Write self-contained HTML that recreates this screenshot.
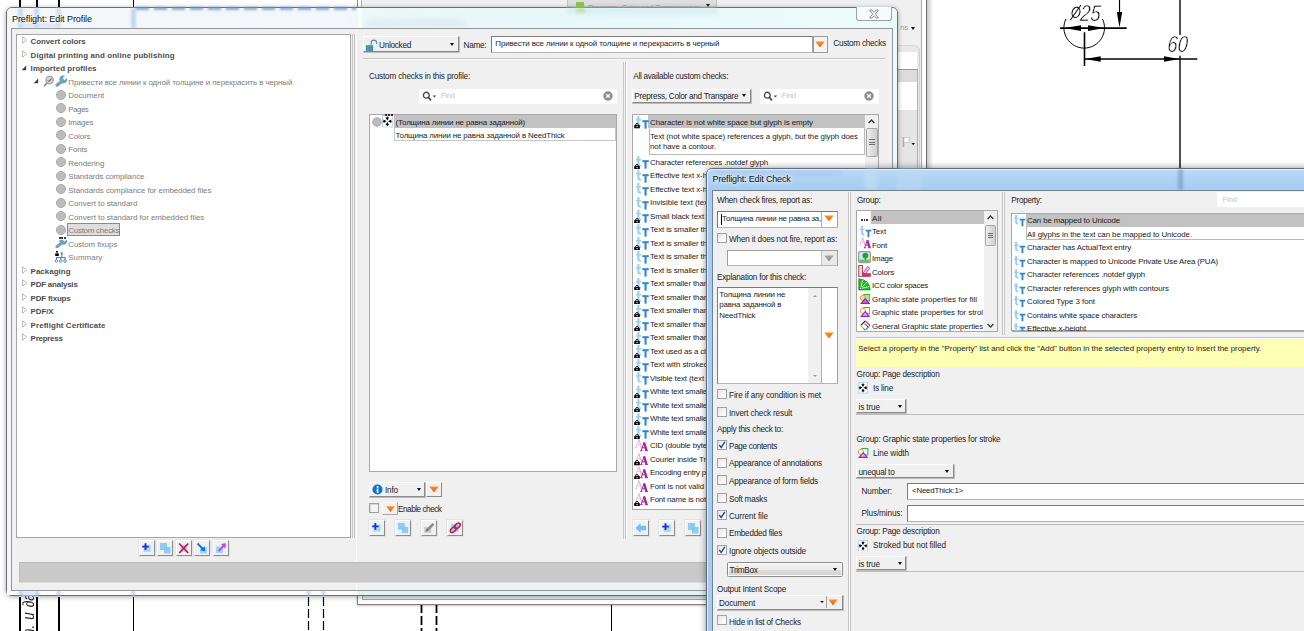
<!DOCTYPE html>
<html><head><meta charset="utf-8"><title>Preflight</title><style>
html,body{margin:0;padding:0;}
body{width:1304px;height:631px;overflow:hidden;position:relative;background:#fff;font-family:"Liberation Sans",sans-serif;}
div,span,svg{position:absolute;box-sizing:border-box;}
.t{white-space:nowrap;}
</style></head><body>
<div style="left:19.4px;top:0px;width:2.1px;height:8px;background:#000;"></div>
<div style="left:35.5px;top:0px;width:2.1px;height:8px;background:#000;"></div>
<div style="left:58.2px;top:0px;width:1.5px;height:8px;background:#000;"></div>
<div style="left:132.6px;top:0px;width:1.5px;height:8px;background:#000;"></div>
<div style="left:19.4px;top:597px;width:2.1px;height:40px;background:#000;"></div>
<div style="left:35.5px;top:597px;width:2.1px;height:40px;background:#000;"></div>
<div style="left:58.2px;top:597px;width:1.5px;height:40px;background:#000;"></div>
<div style="left:132.5px;top:597px;width:1.2px;height:40px;background:#000;"></div>
<svg style="left:18px;top:596px;opacity:.98;" width="22" height="36" viewBox="0 0 22 36"><text transform="translate(16.3,40) rotate(-90) scale(.84,1)" font-family="Liberation Sans" font-style="italic" font-size="16" fill="#1a1a1a" word-spacing="1.5">n. u &#8706;a</text></svg>
<svg style="left:307px;top:597px;" width="3" height="40" viewBox="0 0 3 40"><line x1="1.5" y1="0" x2="1.5" y2="40" stroke="#000" stroke-width="1.2" stroke-dasharray="9 3"/></svg>
<svg style="left:322px;top:597px;" width="3" height="40" viewBox="0 0 3 40"><line x1="1.5" y1="0" x2="1.5" y2="40" stroke="#000" stroke-width="1.2" stroke-dasharray="9 3"/></svg>
<svg style="left:420px;top:604px;" width="3" height="30" viewBox="0 0 3 30"><line x1="1.5" y1="0" x2="1.5" y2="30" stroke="#000" stroke-width="1.8" stroke-dasharray="9 3"/></svg>
<svg style="left:435px;top:604px;" width="3" height="30" viewBox="0 0 3 30"><line x1="1.5" y1="0" x2="1.5" y2="30" stroke="#000" stroke-width="1.8" stroke-dasharray="9 3"/></svg>
<div style="left:610.5px;top:604px;width:1.2px;height:30px;background:#000;"></div>
<svg style="left:1040px;top:0px;opacity:.99;" width="264" height="631" viewBox="0 0 264 631">
<g stroke="#000" fill="none">
<line x1="140" y1="0" x2="140" y2="35" stroke-width="1.4"/>
<line x1="140" y1="55.8" x2="140" y2="631" stroke-width="1.4"/>
<line x1="20" y1="28.1" x2="86.7" y2="28.1" stroke-width="1.6"/>
<path d="M25.9 19 A20.3 20.3 0 1 0 62.5 19" stroke-width="1"/>
<line x1="79.5" y1="0" x2="79.5" y2="14" stroke-width="1.2"/>
<line x1="44.5" y1="32.3" x2="44.5" y2="66" stroke-width="1.6"/>
<line x1="45" y1="59" x2="157.3" y2="59" stroke-width="1.3"/>
</g>
<g fill="#000">
<path d="M79.5 27.4 L76.8 12 L82.2 12Z"/>
<path d="M24.2 28.1 L41 25.3 L41 30.9Z"/>
<path d="M64.5 28.1 L48 25.3 L48 30.9Z"/>
<path d="M45 59 L60.7 56.3 L60.7 61.7Z"/>
<path d="M139.3 59 L124 56.3 L124 61.7Z"/>
</g>
<g stroke="#111" fill="none" stroke-width="1.1">
<ellipse cx="36" cy="12.3" rx="3.8" ry="5.2" transform="rotate(18 36 12.3)"/>
<line x1="30.3" y1="20" x2="41" y2="5"/>
</g>
<g font-family="Liberation Sans" font-style="italic" font-size="23" fill="#111" stroke="#fff" stroke-width=".5">
<text transform="translate(39.8,20.9) scale(.8,1) skewX(-5)">25</text>
<text transform="translate(127.1,52) scale(.8,1) skewX(-5)">60</text>
</g>
</svg>
<div style="left:357px;top:0px;width:570px;height:604px;background:#f0f0f0;"></div>
<div style="left:357px;top:0px;width:1px;height:604px;background:#8a8a8a;"></div>
<div style="left:358px;top:0px;width:3px;height:604px;background:#fff;"></div>
<div style="left:361px;top:0px;width:1px;height:604px;background:#b4b4b4;"></div>
<div style="left:921px;top:0px;width:1px;height:590px;background:#a8a8a8;"></div>
<div style="left:922px;top:0px;width:4px;height:590px;background:#fff;"></div>
<div style="left:926px;top:0px;width:1px;height:590px;background:#6e6e6e;"></div>
<div style="left:927px;top:0px;width:6px;height:590px;background:linear-gradient(90deg,rgba(0,0,0,.22),rgba(0,0,0,0));"></div>
<div style="left:567px;top:0px;width:150px;height:7px;background:#dedede;border:1px solid #c4c4c4;border-top:none;"></div>
<div style="left:576px;top:2px;width:8px;height:5px;background:#8cc63f;"></div>
<span id="t1" class="t" style="left:588px;top:1.50px;font-size:7.6px;line-height:12px;color:#9a9a9a;letter-spacing:-0.114px;">Prepress, Color and Transparency</span>
<div style="left:706px;top:4px;width:0;height:0;border-left:2.5px solid transparent;border-right:2.5px solid transparent;border-top:3px solid #111;"></div>
<span id="t2" class="t" style="left:900px;top:21.50px;font-size:7.8px;line-height:12px;color:#999;">ns</span>
<div style="left:910.5px;top:27px;width:0;height:0;border-left:2.6px solid transparent;border-right:2.6px solid transparent;border-top:3px solid #111;"></div>
<div style="left:897px;top:45px;width:23px;height:545px;background:#e9e9e9;border-top:1px solid #d8d8d8;border-right:1px solid #d0d0d0;border-top-right-radius:6px;"></div>
<div style="left:897px;top:52px;width:20px;height:538px;background:#fff;"></div>
<div style="left:897px;top:69px;width:21px;height:13px;background:#dcdcdc;border-top:1px solid #9a9a9a;"></div>
<div style="left:897px;top:110px;width:21px;height:60px;background:#e5e5e5;"></div>
<div style="left:917px;top:69px;width:1px;height:521px;background:#b0b0b0;"></div>
<svg style="left:902px;top:136px;" width="14" height="12" viewBox="0 0 14 12"><path d="M1.5 1 L1.5 11" stroke="#aaa" stroke-width="1.6"/><path d="M2 1.5 L8 1.5 L6.5 4 L8.5 6.5 L2 6.5Z" fill="#fff" stroke="#c0c0c0" stroke-width=".7"/><path d="M9.5 7 L13 7 L11.2 9.3Z" fill="#111"/></svg>
<div style="left:357px;top:594px;width:349px;height:10.5px;background:#fff;border:1px solid #7f7f7f;border-top:none;border-right:none;box-shadow:0 1px 2px rgba(0,0,0,.25);"></div>
<div style="left:361.5px;top:594px;width:345px;height:6.3px;background:#ececec;border-left:1px solid #a8a8a8;border-bottom:1px solid #a8a8a8;"></div>
<div style="left:6px;top:7px;width:892px;height:588.7px;background:#f3f6fa;border:1px solid #6c6c6c;border-radius:6px;box-shadow:0 1px 5px rgba(0,0,0,.35);"></div>
<div style="left:7px;top:8px;width:890px;height:21px;border-radius:5px 5px 0 0;background:linear-gradient(90deg,#f4f6f9 0%,#f3f6fa 38%,#eef7f9 40%,#e8f8f8 60%,#ecfafa 100%);"></div>
<div style="left:358px;top:589.7px;width:535px;height:5px;background:#dcf3f7;"></div>
<div style="left:7px;top:589.7px;width:351px;height:5px;background:#fbfcfe;"></div>
<div style="left:7px;top:28px;width:4px;height:565.7px;background:#f4f6f9;"></div>
<div style="left:892px;top:28px;width:5px;height:565.7px;background:#eef9fa;"></div>
<div style="left:18px;top:8px;width:5px;height:20px;background:#b9d3ea;filter:blur(1.2px);opacity:.75;"></div>
<div style="left:34px;top:8px;width:5px;height:20px;background:#b9d3ea;filter:blur(1.2px);opacity:.75;"></div>
<div style="left:56px;top:8px;width:5px;height:20px;background:#c6dbee;filter:blur(1.2px);opacity:.75;"></div>
<div style="left:131px;top:8px;width:5px;height:20px;background:#b4cfe8;filter:blur(1.2px);opacity:.75;"></div>
<div style="left:21px;top:24px;width:36px;height:3px;background:#c4d9ed;filter:blur(1.5px);opacity:.7;"></div>
<div style="left:136px;top:7.3px;width:220px;height:2.6px;background:repeating-linear-gradient(90deg,#6b98c8 0 13px,transparent 13px 18px);filter:blur(.9px);opacity:.8;"></div>
<div style="left:357.5px;top:8px;width:4px;height:20px;background:#fbfefe;filter:blur(.6px);opacity:.9;"></div>
<div style="left:366px;top:19px;width:100px;height:9px;background:#d3e6f3;filter:blur(2.5px);opacity:.55;border-radius:3px;"></div>
<div style="left:567px;top:8px;width:150px;height:6px;background:#cfe9ee;filter:blur(2px);opacity:.7;"></div>
<div style="left:576px;top:8px;width:9px;height:5px;background:#b8dc8a;filter:blur(1.5px);opacity:.7;"></div>
<span id="t3" class="t" style="left:12px;top:13.00px;font-size:9px;line-height:12px;color:#111;text-shadow:0 0 4px #fff,0 0 6px #fff;letter-spacing:-0.067px;">Preflight: Edit Profile</span>
<div style="left:19px;top:591px;width:3.5px;height:4.5px;background:#9fc4e6;filter:blur(.8px);opacity:.8;"></div>
<div style="left:35px;top:591px;width:3.5px;height:4.5px;background:#9fc4e6;filter:blur(.8px);opacity:.8;"></div>
<div style="left:57.3px;top:591px;width:3px;height:4.5px;background:#9fc4e6;filter:blur(.8px);opacity:.8;"></div>
<div style="left:132px;top:591px;width:3px;height:4.5px;background:#9fc4e6;filter:blur(.8px);opacity:.8;"></div>
<div style="left:307px;top:591px;width:3px;height:4.5px;background:#9fc4e6;filter:blur(.8px);opacity:.8;"></div>
<div style="left:322px;top:591px;width:3px;height:4.5px;background:#9fc4e6;filter:blur(.8px);opacity:.8;"></div>
<div style="left:22px;top:591px;width:13px;height:4.5px;background:#cfe3f5;filter:blur(.8px);opacity:.8;"></div>
<div style="left:856px;top:7px;width:36px;height:14px;background:#f7fbfd;border:1px solid #9aa4ac;border-top:none;border-radius:0 0 3px 3px;"></div>
<svg style="left:868px;top:9px;" width="12" height="10" viewBox="0 0 12 10"><path d="M1.5 1 L4 1 L6 3.4 L8 1 L10.5 1 L7.3 5 L10.5 9 L8 9 L6 6.6 L4 9 L1.5 9 L4.7 5Z" fill="#fdfdfd" stroke="#7d848a" stroke-width=".9"/></svg>
<div style="left:11px;top:28px;width:882px;height:563px;background:#f0f0f0;border:1px solid #8f969c;"></div>
<div style="left:16px;top:34px;width:335px;height:504px;background:#fff;border:1px solid #a5a5a5;"></div>
<div style="left:352px;top:34px;width:1px;height:504px;background:#c8c8c8;"></div>
<div style="left:354px;top:34px;width:1px;height:504px;background:#c8c8c8;"></div>
<div style="left:356px;top:29px;width:1px;height:560.5px;background:#fbfbfb;"></div>
<svg style="left:22.3px;top:36.400000000000006px;" width="6" height="8" viewBox="0 0 6 8"><path d="M.6 .8 L4.6 4 L.6 7.2Z" fill="#fff" stroke="#a6a6a6" stroke-width=".8"/></svg>
<span id="t4" class="t" style="left:30.6px;top:35.50px;font-size:7.9px;line-height:12px;color:#4d4d4d;font-weight:700;letter-spacing:-0.049px;">Convert colors</span>
<svg style="left:22.3px;top:49.900000000000006px;" width="6" height="8" viewBox="0 0 6 8"><path d="M.6 .8 L4.6 4 L.6 7.2Z" fill="#fff" stroke="#a6a6a6" stroke-width=".8"/></svg>
<span id="t5" class="t" style="left:30.6px;top:49.50px;font-size:7.9px;line-height:12px;color:#4d4d4d;font-weight:700;letter-spacing:0.121px;">Digital printing and online publishing</span>
<svg style="left:21.4px;top:64.6px;" width="6" height="6" viewBox="0 0 6 6"><path d="M5.2 .6 L5.2 5.2 L.6 5.2Z" fill="#404040"/></svg>
<span id="t6" class="t" style="left:30.6px;top:62.50px;font-size:7.9px;line-height:12px;color:#4d4d4d;font-weight:700;letter-spacing:0.091px;">Imported profiles</span>
<svg style="left:33.3px;top:77.69999999999999px;" width="6" height="6" viewBox="0 0 6 6"><path d="M5.2 .6 L5.2 5.2 L.6 5.2Z" fill="#404040"/></svg>
<svg style="left:42.8px;top:74.89999999999999px;" width="12" height="12" viewBox="0 0 12 12"><circle cx="6.6" cy="5" r="3.7" fill="#d2d2d2" stroke="#9a9a9a" stroke-width="1.1"/><path d="M4 8 L1 11.2" stroke="#8a8a8a" stroke-width="1.7"/><path d="M4.8 5.2 L6.2 6.6 L8.6 3.4" stroke="#555" stroke-width="1" fill="none"/></svg>
<svg style="left:54.5px;top:74.69999999999999px;" width="12" height="12" viewBox="0 0 12 12"><path d="M7 6.2 L2 10.3" stroke="#6fa3bb" stroke-width="3.1" stroke-linecap="round"/><circle cx="8.3" cy="4.5" r="3.9" fill="#6fa3bb"/><path d="M8.6 4.2 L12.6 .2" stroke="#fff" stroke-width="2.7"/></svg>
<span id="t7" class="t" style="left:68.3px;top:76.50px;font-size:7.9px;line-height:12px;color:#7d7d7d;letter-spacing:-0.077px;">Привести все линии к одной толщине и перекрасить в черный</span>
<svg style="left:54.7px;top:88.69999999999999px;" width="12" height="12" viewBox="0 0 12 12"><circle cx="6" cy="6" r="4.6" fill="#bcbcbc" stroke="#a8a8a8" stroke-width=".9"/></svg>
<span id="t8" class="t" style="left:68.3px;top:89.50px;font-size:7.9px;line-height:12px;color:#7d7d7d;letter-spacing:0.004px;">Document</span>
<svg style="left:54.7px;top:102.19999999999999px;" width="12" height="12" viewBox="0 0 12 12"><circle cx="6" cy="6" r="4.6" fill="#bcbcbc" stroke="#a8a8a8" stroke-width=".9"/></svg>
<span id="t9" class="t" style="left:68.3px;top:103.50px;font-size:7.9px;line-height:12px;color:#7d7d7d;letter-spacing:-0.475px;">Pages</span>
<svg style="left:54.7px;top:115.69999999999999px;" width="12" height="12" viewBox="0 0 12 12"><circle cx="6" cy="6" r="4.6" fill="#bcbcbc" stroke="#a8a8a8" stroke-width=".9"/></svg>
<span id="t10" class="t" style="left:68.3px;top:116.50px;font-size:7.9px;line-height:12px;color:#7d7d7d;letter-spacing:-0.148px;">Images</span>
<svg style="left:54.7px;top:129.2px;" width="12" height="12" viewBox="0 0 12 12"><circle cx="6" cy="6" r="4.6" fill="#bcbcbc" stroke="#a8a8a8" stroke-width=".9"/></svg>
<span id="t11" class="t" style="left:68.3px;top:130.50px;font-size:7.9px;line-height:12px;color:#7d7d7d;letter-spacing:-0.135px;">Colors</span>
<svg style="left:54.7px;top:142.7px;" width="12" height="12" viewBox="0 0 12 12"><circle cx="6" cy="6" r="4.6" fill="#bcbcbc" stroke="#a8a8a8" stroke-width=".9"/></svg>
<span id="t12" class="t" style="left:68.3px;top:143.50px;font-size:7.9px;line-height:12px;color:#7d7d7d;letter-spacing:-0.147px;">Fonts</span>
<svg style="left:54.7px;top:156.2px;" width="12" height="12" viewBox="0 0 12 12"><circle cx="6" cy="6" r="4.6" fill="#bcbcbc" stroke="#a8a8a8" stroke-width=".9"/></svg>
<span id="t13" class="t" style="left:68.3px;top:157.50px;font-size:7.9px;line-height:12px;color:#7d7d7d;letter-spacing:-0.047px;">Rendering</span>
<svg style="left:54.7px;top:169.7px;" width="12" height="12" viewBox="0 0 12 12"><circle cx="6" cy="6" r="4.6" fill="#bcbcbc" stroke="#a8a8a8" stroke-width=".9"/></svg>
<span id="t14" class="t" style="left:68.3px;top:170.50px;font-size:7.9px;line-height:12px;color:#7d7d7d;letter-spacing:-0.104px;">Standards compliance</span>
<svg style="left:54.7px;top:183.2px;" width="12" height="12" viewBox="0 0 12 12"><circle cx="6" cy="6" r="4.6" fill="#bcbcbc" stroke="#a8a8a8" stroke-width=".9"/></svg>
<span id="t15" class="t" style="left:68.3px;top:184.50px;font-size:7.9px;line-height:12px;color:#7d7d7d;letter-spacing:-0.056px;">Standards compliance for embedded files</span>
<svg style="left:54.7px;top:196.7px;" width="12" height="12" viewBox="0 0 12 12"><circle cx="6" cy="6" r="4.6" fill="#bcbcbc" stroke="#a8a8a8" stroke-width=".9"/></svg>
<span id="t16" class="t" style="left:68.3px;top:197.50px;font-size:7.9px;line-height:12px;color:#7d7d7d;letter-spacing:-0.016px;">Convert to standard</span>
<svg style="left:54.7px;top:210.2px;" width="12" height="12" viewBox="0 0 12 12"><circle cx="6" cy="6" r="4.6" fill="#bcbcbc" stroke="#a8a8a8" stroke-width=".9"/></svg>
<span id="t17" class="t" style="left:68.3px;top:211.50px;font-size:7.9px;line-height:12px;color:#7d7d7d;letter-spacing:-0.011px;">Convert to standard for embedded files</span>
<svg style="left:54.7px;top:223.7px;" width="12" height="12" viewBox="0 0 12 12"><circle cx="6" cy="6" r="4.6" fill="#bcbcbc" stroke="#a8a8a8" stroke-width=".9"/></svg>
<div style="left:67px;top:222.89999999999998px;width:53px;height:13.5px;background:#dedede;border:1px solid #7090b8;"></div>
<span id="t18" class="t" style="left:68.3px;top:224.50px;font-size:7.9px;line-height:12px;color:#7d7d7d;letter-spacing:-0.226px;">Custom checks</span>
<svg style="left:54.5px;top:240.2px;" width="12" height="7.8" viewBox="0 3.6 12 7.8"><path d="M7 6.2 L2 10.3" stroke="#6fa3bb" stroke-width="3.1" stroke-linecap="round"/><circle cx="8.3" cy="4.5" r="3.9" fill="#6fa3bb"/><path d="M8.6 4.2 L12.6 .2" stroke="#fff" stroke-width="2.7"/></svg>
<div style="left:58.6px;top:237.29999999999998px;width:2.2px;height:2.2px;background:#000;border-radius:1px;"></div>
<div style="left:61.300000000000004px;top:237.29999999999998px;width:2.2px;height:2.2px;background:#000;border-radius:1px;"></div>
<div style="left:64.0px;top:237.29999999999998px;width:2.2px;height:2.2px;background:#000;border-radius:1px;"></div>
<span id="t19" class="t" style="left:68.3px;top:238.50px;font-size:7.9px;line-height:12px;color:#7d7d7d;letter-spacing:-0.077px;">Custom fixups</span>
<svg style="left:54px;top:249.70000000000005px;" width="13" height="13" viewBox="0 0 13 13"><rect x="1.2" y="3.4" width="3.6" height="2.6" fill="#000"/><circle cx="3" cy="1.8" r="1" fill="#000"/><path d="M6.5 3.8 L9 3.8 M7.8 2 L7.8 7.5 M2.5 10 L2.5 7.5 L11 7.5 L11 10 M6.8 7.5 L6.8 10" stroke="#4a86c5" stroke-width="1.1" fill="none"/><circle cx="2.5" cy="11" r="1.3" fill="#fff" stroke="#4a86c5" stroke-width=".9"/><circle cx="6.8" cy="11" r="1.3" fill="#fff" stroke="#4a86c5" stroke-width=".9"/><circle cx="11" cy="11" r="1.3" fill="#fff" stroke="#4a86c5" stroke-width=".9"/></svg>
<span id="t20" class="t" style="left:68.3px;top:251.50px;font-size:7.9px;line-height:12px;color:#7d7d7d;letter-spacing:0.033px;">Summary</span>
<svg style="left:22.3px;top:265.90000000000003px;" width="6" height="8" viewBox="0 0 6 8"><path d="M.6 .8 L4.6 4 L.6 7.2Z" fill="#fff" stroke="#a6a6a6" stroke-width=".8"/></svg>
<span id="t21" class="t" style="left:30.6px;top:265.50px;font-size:7.9px;line-height:12px;color:#4d4d4d;font-weight:700;letter-spacing:0.059px;">Packaging</span>
<svg style="left:22.3px;top:279.40000000000003px;" width="6" height="8" viewBox="0 0 6 8"><path d="M.6 .8 L4.6 4 L.6 7.2Z" fill="#fff" stroke="#a6a6a6" stroke-width=".8"/></svg>
<span id="t22" class="t" style="left:30.6px;top:278.50px;font-size:7.9px;line-height:12px;color:#4d4d4d;font-weight:700;letter-spacing:-0.177px;">PDF analysis</span>
<svg style="left:22.3px;top:292.90000000000003px;" width="6" height="8" viewBox="0 0 6 8"><path d="M.6 .8 L4.6 4 L.6 7.2Z" fill="#fff" stroke="#a6a6a6" stroke-width=".8"/></svg>
<span id="t23" class="t" style="left:30.6px;top:292.50px;font-size:7.9px;line-height:12px;color:#4d4d4d;font-weight:700;letter-spacing:-0.122px;">PDF fixups</span>
<svg style="left:22.3px;top:306.40000000000003px;" width="6" height="8" viewBox="0 0 6 8"><path d="M.6 .8 L4.6 4 L.6 7.2Z" fill="#fff" stroke="#a6a6a6" stroke-width=".8"/></svg>
<span id="t24" class="t" style="left:30.6px;top:305.50px;font-size:7.9px;line-height:12px;color:#4d4d4d;font-weight:700;letter-spacing:-0.050px;">PDF/X</span>
<svg style="left:22.3px;top:319.90000000000003px;" width="6" height="8" viewBox="0 0 6 8"><path d="M.6 .8 L4.6 4 L.6 7.2Z" fill="#fff" stroke="#a6a6a6" stroke-width=".8"/></svg>
<span id="t25" class="t" style="left:30.6px;top:319.50px;font-size:7.9px;line-height:12px;color:#4d4d4d;font-weight:700;letter-spacing:0.105px;">Preflight Certificate</span>
<svg style="left:22.3px;top:333.40000000000003px;" width="6" height="8" viewBox="0 0 6 8"><path d="M.6 .8 L4.6 4 L.6 7.2Z" fill="#fff" stroke="#a6a6a6" stroke-width=".8"/></svg>
<span id="t26" class="t" style="left:30.6px;top:332.50px;font-size:7.9px;line-height:12px;color:#4d4d4d;font-weight:700;letter-spacing:-0.223px;">Prepress</span>
<div style="left:138.5px;top:540px;width:16px;height:16px;background:#f0f0f0;border:1px solid;border-color:#fff #8c8c8c #8c8c8c #fff;box-shadow:0 0 0 .5px #d8d8d8;"></div>
<svg style="left:138.5px;top:540px;" width="16" height="16" viewBox="0 0 16 16"><rect x="4.6" y="4.7" width="7.2" height="7.2" fill="#a8d8f8"/><path d="M6.5 3.2 L6.5 10 M3.2 6.6 L9.8 6.6" stroke="#1838c8" stroke-width="1.9"/></svg>
<div style="left:157.0px;top:540px;width:16px;height:16px;background:#f0f0f0;border:1px solid;border-color:#fff #8c8c8c #8c8c8c #fff;box-shadow:0 0 0 .5px #d8d8d8;"></div>
<svg style="left:157.0px;top:540px;" width="16" height="16" viewBox="0 0 16 16"><rect x="3" y="3" width="7" height="7" fill="#8ccdf6"/><rect x="7" y="7" width="6.5" height="6.5" fill="#7ec4f4" opacity=".85"/></svg>
<div style="left:175.5px;top:540px;width:16px;height:16px;background:#f0f0f0;border:1px solid;border-color:#fff #8c8c8c #8c8c8c #fff;box-shadow:0 0 0 .5px #d8d8d8;"></div>
<svg style="left:175.5px;top:540px;" width="16" height="16" viewBox="0 0 16 16"><rect x="4.5" y="4.8" width="7" height="7" fill="#9ed6fa"/><path d="M3.2 3.5 L12.2 13 M12.2 3.5 L3.2 13" stroke="#c81848" stroke-width="1.7"/></svg>
<div style="left:194.0px;top:540px;width:16px;height:16px;background:#f0f0f0;border:1px solid;border-color:#fff #8c8c8c #8c8c8c #fff;box-shadow:0 0 0 .5px #d8d8d8;"></div>
<svg style="left:194.0px;top:540px;" width="16" height="16" viewBox="0 0 16 16"><rect x="6" y="7" width="7" height="6.5" fill="#9ed6fa"/><path d="M3.5 3.5 L10 10" stroke="#0878e8" stroke-width="1.8"/><path d="M11.3 11.3 L6.2 10.6 L10.6 6.2Z" fill="#0878e8"/></svg>
<div style="left:212.5px;top:540px;width:16px;height:16px;background:#f0f0f0;border:1px solid;border-color:#fff #8c8c8c #8c8c8c #fff;box-shadow:0 0 0 .5px #d8d8d8;"></div>
<svg style="left:212.5px;top:540px;" width="16" height="16" viewBox="0 0 16 16"><rect x="3" y="6.5" width="7" height="6.5" fill="#9ed6fa"/><path d="M5.5 11 L11.5 5" stroke="#c63cf2" stroke-width="1.8"/><path d="M13 3.3 L12.2 8.4 L7.9 4.1Z" fill="#c63cf2"/></svg>
<div style="left:19px;top:561.5px;width:690px;height:21px;background:#c9c9c9;border-top:1px solid #b9b9b9;border-left:1px solid #bdbdbd;border-bottom:1px solid #dcdcdc;"></div>
<div style="left:363px;top:36px;width:95.5px;height:16.3px;background:#f0f0f0;border:1px solid;border-color:#fdfdfd #8a8a8a #8a8a8a #fdfdfd;box-shadow:.5px .5px 0 .3px #b0b0b0;"></div>
<div style="left:450.0px;top:42.949999999999996px;width:0;height:0;border-left:2.6px solid transparent;border-right:2.6px solid transparent;border-top:3px solid #111;"></div>
<svg style="left:364.5px;top:38.5px;" width="14" height="13" viewBox="0 0 14 13"><path d="M6.2 6.5 L6.2 3.8 C6.2 .2 11.6 .2 11.6 3.8 L11.6 5" fill="none" stroke="#4e93ab" stroke-width="1.1"/><rect x=".8" y="6.2" width="7.4" height="5.8" fill="#4e93ab"/></svg>
<span id="t27" class="t" style="left:379px;top:39.50px;font-size:8.2px;line-height:12px;color:#1c1c1c;letter-spacing:-0.268px;">Unlocked</span>
<span id="t28" class="t" style="left:463.6px;top:39.50px;font-size:8.2px;line-height:12px;color:#1c1c1c;letter-spacing:-0.285px;">Name:</span>
<div style="left:491px;top:36px;width:322px;height:16.6px;background:#fff;border:1px solid #7a7a7a;border-bottom-color:#b5b5b5;border-right-color:#a0a0a0;"></div>
<span id="t29" class="t" style="left:495.3px;top:37.50px;font-size:7.9px;line-height:12px;color:#1c1c1c;letter-spacing:-0.077px;">Привести все линии к одной толщине и перекрасить в черный</span>
<div style="left:812.5px;top:36px;width:15.5px;height:16.6px;background:#f4f4f4;border:1px solid #9a9a9a;"></div>
<svg style="left:815.3px;top:41.1px;" width="10.0" height="7.0" viewBox="0 0 10 7"><defs><linearGradient id="og820_44" x1="0" y1="0" x2="0" y2="1"><stop offset="0" stop-color="#f7941d"/><stop offset="1" stop-color="#f15a22"/></linearGradient></defs><path d="M.3 .4 L9.7 .4 L5 6.6Z" fill="url(#og820_44)"/></svg>
<span id="t30" class="t" style="left:833.3px;top:37.50px;font-size:8.2px;line-height:12px;color:#1c1c1c;letter-spacing:-0.267px;">Custom checks</span>
<div style="left:363px;top:58px;width:522px;height:1px;background:#c6c6c6;"></div>
<div style="left:363px;top:59px;width:522px;height:1px;background:#fafafa;"></div>
<span id="t31" class="t" style="left:369px;top:70.50px;font-size:8.2px;line-height:12px;color:#1c1c1c;letter-spacing:-0.183px;">Custom checks in this profile:</span>
<div style="left:419px;top:88.5px;width:198px;height:15.3px;background:#fff;"></div>
<svg style="left:421.5px;top:91.0px;" width="18" height="11" viewBox="0 0 18 11"><circle cx="4.3" cy="4.2" r="2.9" fill="none" stroke="#4a4a4a" stroke-width="1.4"/><path d="M6.3 6.4 L9 9.4" stroke="#4a4a4a" stroke-width="1.7"/><path d="M10.6 4.4 L14.2 4.4 L12.4 6.6Z" fill="#4a4a4a"/></svg>
<span id="t32" class="t" style="left:440.7px;top:89.50px;font-size:7.9px;line-height:12px;color:#c6c6c6;letter-spacing:-0.265px;">Find</span>
<svg style="left:602.5px;top:91.2px;" width="10" height="10" viewBox="0 0 10 10"><circle cx="5" cy="5" r="4.7" fill="#8e8e8e"/><path d="M3.2 3.2 L6.8 6.8 M6.8 3.2 L3.2 6.8" stroke="#fff" stroke-width="1.3"/></svg>
<div style="left:369px;top:114px;width:248px;height:358px;background:#fff;border:1px solid #a8a8a8;"></div>
<div style="left:393.7px;top:115px;width:222.3px;height:13.3px;background:#c2c2c2;"></div>
<div style="left:393.7px;top:128.3px;width:222.3px;height:12.8px;background:#fff;border:1px solid #c6c6c6;border-top:none;"></div>
<svg style="left:371.3px;top:115.8px;" width="12" height="12" viewBox="0 0 12 12"><circle cx="6" cy="6" r="4.3" fill="#bcbcbc" stroke="#a8a8a8" stroke-width=".9"/></svg>
<svg style="left:382.2px;top:115.3px;" width="10.7" height="12.4" viewBox="0 0 10 11.5"><rect x=".4" y=".4" width="9.2" height="10.7" fill="#fff" stroke="#a9d0e8" stroke-width=".8"/><path d="M5 5.1 L3.3 2.3 L6.7 2.3Z M5 6.5 L3.3 9.3 L6.7 9.3Z M4.3 5.8 L1.5 4.1 L1.5 7.5Z M5.7 5.8 L8.5 4.1 L8.5 7.5Z" fill="#000"/><path d="M5 1.4 V3 M5 10.2 V8.6 M.9 5.8 H2.2 M9.1 5.8 H7.8" stroke="#000" stroke-width="1"/></svg>
<div style="left:385.0px;top:114.2px;width:2px;height:2px;background:#000;border-radius:1px;"></div>
<div style="left:387.8px;top:114.2px;width:2px;height:2px;background:#000;border-radius:1px;"></div>
<div style="left:390.6px;top:114.2px;width:2px;height:2px;background:#000;border-radius:1px;"></div>
<span id="t33" class="t" style="left:395.5px;top:116.50px;font-size:7.9px;line-height:12px;color:#1c1c1c;letter-spacing:-0.132px;">(Толщина линии не равна заданной)</span>
<span id="t34" class="t" style="left:395.5px;top:129.50px;font-size:7.9px;line-height:12px;color:#1c1c1c;letter-spacing:-0.137px;">Толщина линии не равна заданной в NeedThick</span>
<div style="left:369.3px;top:481.5px;width:56px;height:15.5px;background:#f0f0f0;border:1px solid;border-color:#fdfdfd #8a8a8a #8a8a8a #fdfdfd;box-shadow:.5px .5px 0 .3px #b0b0b0;"></div>
<div style="left:416.8px;top:488.05px;width:0;height:0;border-left:2.6px solid transparent;border-right:2.6px solid transparent;border-top:3px solid #111;"></div>
<svg style="left:371.8px;top:483.8px;" width="11" height="11" viewBox="0 0 11 11"><circle cx="5.5" cy="5.5" r="5" fill="#1274c4"/><rect x="4.7" y="4.6" width="1.7" height="4.2" fill="#fff"/><circle cx="5.55" cy="2.9" r="1" fill="#fff"/></svg>
<span id="t35" class="t" style="left:385px;top:484.50px;font-size:8.2px;line-height:12px;color:#1c1c1c;letter-spacing:-0.168px;">Info</span>
<div style="left:426px;top:481.5px;width:16px;height:15.5px;background:#f0f0f0;border:1px solid;border-color:#fff #8a8a8a #8a8a8a #fff;"></div>
<svg style="left:429.3px;top:486.3px;" width="10.0" height="7.0" viewBox="0 0 10 7"><defs><linearGradient id="og434_489" x1="0" y1="0" x2="0" y2="1"><stop offset="0" stop-color="#f7941d"/><stop offset="1" stop-color="#f15a22"/></linearGradient></defs><path d="M.3 .4 L9.7 .4 L5 6.6Z" fill="url(#og434_489)"/></svg>
<div style="left:369.3px;top:503.3px;width:9.8px;height:10px;background:#f4f4f4;border:1px solid #a0a0a0;box-shadow:inset 1px 1px 0 #d8d8d8;"></div>
<div style="left:382.4px;top:502px;width:15.4px;height:12.6px;background:#f0f0f0;border:1px solid;border-color:#fdfdfd #a8a8a8 #a8a8a8 #fdfdfd;"></div>
<svg style="left:386.1px;top:505.55px;" width="9.0" height="6.3" viewBox="0 0 10 7"><defs><linearGradient id="og390_508" x1="0" y1="0" x2="0" y2="1"><stop offset="0" stop-color="#f7941d"/><stop offset="1" stop-color="#f15a22"/></linearGradient></defs><path d="M.3 .4 L9.7 .4 L5 6.6Z" fill="url(#og390_508)"/></svg>
<span id="t36" class="t" style="left:398px;top:503.50px;font-size:8.2px;line-height:12px;color:#1c1c1c;letter-spacing:-0.473px;">Enable check</span>
<div style="left:369.3px;top:520px;width:15.6px;height:15.6px;background:#f0f0f0;border:1px solid;border-color:#fff #8c8c8c #8c8c8c #fff;box-shadow:0 0 0 .5px #d8d8d8;"></div>
<svg style="left:369.3px;top:520px;" width="15.6" height="15.6" viewBox="0 0 16 16"><rect x="4.6" y="4.7" width="7.2" height="7.2" fill="#a8d8f8"/><path d="M6.5 3.2 L6.5 10 M3.2 6.6 L9.8 6.6" stroke="#1838c8" stroke-width="1.9"/></svg>
<div style="left:395.3px;top:520px;width:15.6px;height:15.6px;background:#f0f0f0;border:1px solid;border-color:#fff #8c8c8c #8c8c8c #fff;box-shadow:0 0 0 .5px #d8d8d8;"></div>
<svg style="left:395.3px;top:520px;" width="15.6" height="15.6" viewBox="0 0 16 16"><rect x="3" y="3" width="7" height="7" fill="#8ccdf6"/><rect x="7" y="7" width="6.5" height="6.5" fill="#7ec4f4" opacity=".85"/></svg>
<div style="left:421.2px;top:520px;width:15.6px;height:15.6px;background:#f0f0f0;border:1px solid;border-color:#fff #8c8c8c #8c8c8c #fff;box-shadow:0 0 0 .5px #d8d8d8;"></div>
<svg style="left:421.2px;top:520px;" width="15.6" height="15.6" viewBox="0 0 16 16"><rect x="3.2" y="7" width="7.2" height="6.3" fill="#cdcdcd"/><path d="M5 11.6 L6.2 8.6 L11.8 3 L13.8 5 L8.2 10.6Z" fill="#8c8c8c"/><path d="M4.6 12 L6 8.8 L8 10.8Z" fill="#6a6a6a"/></svg>
<div style="left:447.1px;top:520px;width:15.6px;height:15.6px;background:#f0f0f0;border:1px solid;border-color:#fff #8c8c8c #8c8c8c #fff;box-shadow:0 0 0 .5px #d8d8d8;"></div>
<svg style="left:447.1px;top:520px;" width="15.6" height="15.6" viewBox="0 0 16 16"><rect x="4.4" y="4.2" width="7.4" height="7.6" fill="#8ccdf6"/><ellipse cx="6.4" cy="10" rx="3.4" ry="2.1" transform="rotate(-42 6.4 10)" fill="none" stroke="#c81848" stroke-width="1.6"/><ellipse cx="10.6" cy="6" rx="3.4" ry="2.1" transform="rotate(-42 10.6 6)" fill="none" stroke="#c81848" stroke-width="1.6"/></svg>
<div style="left:622.5px;top:62px;width:1px;height:476.7px;background:#c8c8c8;"></div>
<div style="left:624.7px;top:62px;width:1px;height:476.7px;background:#c8c8c8;"></div>
<div style="left:626px;top:62px;width:1px;height:476.7px;background:#fbfbfb;"></div>
<span id="t37" class="t" style="left:633.2px;top:70.50px;font-size:8.2px;line-height:12px;color:#1c1c1c;letter-spacing:-0.264px;">All available custom checks:</span>
<div style="left:632px;top:88.5px;width:118.5px;height:14.3px;background:#f0f0f0;border:1px solid;border-color:#fdfdfd #8a8a8a #8a8a8a #fdfdfd;box-shadow:.5px .5px 0 .3px #b0b0b0;"></div>
<div style="left:742.0px;top:94.45px;width:0;height:0;border-left:2.6px solid transparent;border-right:2.6px solid transparent;border-top:3px solid #111;"></div>
<span id="t38" class="t" style="left:634.3px;top:90.50px;font-size:8.2px;line-height:12px;color:#1c1c1c;letter-spacing:-0.274px;">Prepress, Color and Transpare</span>
<div style="left:760px;top:88.5px;width:118.5px;height:15.3px;background:#fff;"></div>
<svg style="left:762.5px;top:91.0px;" width="18" height="11" viewBox="0 0 18 11"><circle cx="4.3" cy="4.2" r="2.9" fill="none" stroke="#4a4a4a" stroke-width="1.4"/><path d="M6.3 6.4 L9 9.4" stroke="#4a4a4a" stroke-width="1.7"/><path d="M10.6 4.4 L14.2 4.4 L12.4 6.6Z" fill="#4a4a4a"/></svg>
<span id="t39" class="t" style="left:781.7px;top:89.50px;font-size:7.9px;line-height:12px;color:#c6c6c6;letter-spacing:-0.265px;">Find</span>
<svg style="left:864.0px;top:91.2px;" width="10" height="10" viewBox="0 0 10 10"><circle cx="5" cy="5" r="4.7" fill="#8e8e8e"/><path d="M3.2 3.2 L6.8 6.8 M6.8 3.2 L3.2 6.8" stroke="#fff" stroke-width="1.3"/></svg>
<div style="left:631.5px;top:114px;width:247px;height:396px;background:#fff;border:1px solid #a8a8a8;"></div>
<div style="left:648px;top:115px;width:216.5px;height:13.3px;background:#c2c2c2;"></div>
<div style="left:648.5px;top:128.3px;width:216px;height:27px;background:#fff;border:1px solid #b9b9b9;border-top:none;"></div>
<div style="left:864.5px;top:115px;width:13.5px;height:394px;background:#f0f0f0;"></div>
<svg style="left:868px;top:118.5px;" width="7" height="5" viewBox="0 0 7 5"><path d="M.6 4 L3.5 1 L6.4 4" fill="none" stroke="#3c3c3c" stroke-width="1.4"/></svg>
<div style="left:866.3px;top:128.3px;width:11.6px;height:28.6px;border:1px solid #a6a6a6;border-radius:1.5px;background:linear-gradient(90deg,#ededed,#cfcfcf);"></div>
<div style="left:869.3px;top:139.3px;width:5.5px;height:1.1px;background:#6e6e6e;"></div>
<div style="left:869.3px;top:141.5px;width:5.5px;height:1.1px;background:#6e6e6e;"></div>
<div style="left:869.3px;top:143.70000000000002px;width:5.5px;height:1.1px;background:#6e6e6e;"></div>
<span id="t40" class="t" style="left:650px;top:116.50px;font-size:7.9px;line-height:12px;color:#1c1c1c;letter-spacing:-0.050px;">Character is not white space but glyph is empty</span>
<span id="t41" class="t" style="left:650px;top:130.50px;font-size:7.9px;line-height:12px;color:#1c1c1c;letter-spacing:-0.078px;">Text (not white space) references a glyph, but the glyph does</span>
<span id="t42" class="t" style="left:650px;top:140.50px;font-size:7.9px;line-height:12px;color:#1c1c1c;letter-spacing:-0.059px;">not have a contour.</span>
<svg style="left:636px;top:116.0px;" width="13.559999999999999" height="13.559999999999999" viewBox="0 0 12 12"><path d="M2.1 0 V7.2 Q2.1 8.7 4.3 8.5" fill="none" stroke="#98d0f6" stroke-width="1.9"/><path d="M0 3.3 H4.5" stroke="#98d0f6" stroke-width="1.4"/><path d="M5.6 4.6 H11.3" stroke="#3388cc" stroke-width="1.8"/><path d="M8.45 4.6 V11.2" stroke="#3388cc" stroke-width="1.9"/></svg>
<svg style="left:634.3px;top:123.19999999999999px;" width="6" height="5.4" viewBox="0 0 6 5.4"><path d="M1.6 2.4 V1.7 C1.6 .2 4.4 .2 4.4 1.7 V2.4" fill="none" stroke="#000" stroke-width="1"/><rect x=".2" y="2.1" width="5.6" height="3.2" fill="#000"/><rect x="2.5" y="3" width="1.1" height="1.3" fill="#fff"/></svg>
<svg style="left:636px;top:156.3px;" width="13.559999999999999" height="13.559999999999999" viewBox="0 0 12 12"><path d="M2.1 0 V7.2 Q2.1 8.7 4.3 8.5" fill="none" stroke="#98d0f6" stroke-width="1.9"/><path d="M0 3.3 H4.5" stroke="#98d0f6" stroke-width="1.4"/><path d="M5.6 4.6 H11.3" stroke="#3388cc" stroke-width="1.8"/><path d="M8.45 4.6 V11.2" stroke="#3388cc" stroke-width="1.9"/></svg>
<svg style="left:634.3px;top:163.5px;" width="6" height="5.4" viewBox="0 0 6 5.4"><path d="M1.6 2.4 V1.7 C1.6 .2 4.4 .2 4.4 1.7 V2.4" fill="none" stroke="#000" stroke-width="1"/><rect x=".2" y="2.1" width="5.6" height="3.2" fill="#000"/><rect x="2.5" y="3" width="1.1" height="1.3" fill="#fff"/></svg>
<span id="t43" class="t" style="left:650px;top:156.50px;font-size:7.9px;line-height:12px;color:#1c1c1c;letter-spacing:-0.103px;">Character references .notdef glyph</span>
<svg style="left:636px;top:169.8px;" width="13.559999999999999" height="13.559999999999999" viewBox="0 0 12 12"><path d="M2.1 0 V7.2 Q2.1 8.7 4.3 8.5" fill="none" stroke="#98d0f6" stroke-width="1.9"/><path d="M0 3.3 H4.5" stroke="#98d0f6" stroke-width="1.4"/><path d="M5.6 4.6 H11.3" stroke="#3388cc" stroke-width="1.8"/><path d="M8.45 4.6 V11.2" stroke="#3388cc" stroke-width="1.9"/></svg>
<span id="t44" class="t" style="left:650px;top:169.50px;font-size:7.9px;line-height:12px;color:#1c1c1c;letter-spacing:-0.066px;">Effective text x-h</span>
<svg style="left:636px;top:183.3px;" width="13.559999999999999" height="13.559999999999999" viewBox="0 0 12 12"><path d="M2.1 0 V7.2 Q2.1 8.7 4.3 8.5" fill="none" stroke="#98d0f6" stroke-width="1.9"/><path d="M0 3.3 H4.5" stroke="#98d0f6" stroke-width="1.4"/><path d="M5.6 4.6 H11.3" stroke="#3388cc" stroke-width="1.8"/><path d="M8.45 4.6 V11.2" stroke="#3388cc" stroke-width="1.9"/></svg>
<span id="t45" class="t" style="left:650px;top:183.50px;font-size:7.9px;line-height:12px;color:#1c1c1c;letter-spacing:-0.066px;">Effective text x-h</span>
<svg style="left:636px;top:196.8px;" width="13.559999999999999" height="13.559999999999999" viewBox="0 0 12 12"><path d="M2.1 0 V7.2 Q2.1 8.7 4.3 8.5" fill="none" stroke="#98d0f6" stroke-width="1.9"/><path d="M0 3.3 H4.5" stroke="#98d0f6" stroke-width="1.4"/><path d="M5.6 4.6 H11.3" stroke="#3388cc" stroke-width="1.8"/><path d="M8.45 4.6 V11.2" stroke="#3388cc" stroke-width="1.9"/></svg>
<span id="t46" class="t" style="left:650px;top:196.50px;font-size:7.9px;line-height:12px;color:#1c1c1c;letter-spacing:-0.040px;">Invisible text (tex</span>
<svg style="left:636px;top:210.3px;" width="13.559999999999999" height="13.559999999999999" viewBox="0 0 12 12"><path d="M2.1 0 V7.2 Q2.1 8.7 4.3 8.5" fill="none" stroke="#98d0f6" stroke-width="1.9"/><path d="M0 3.3 H4.5" stroke="#98d0f6" stroke-width="1.4"/><path d="M5.6 4.6 H11.3" stroke="#3388cc" stroke-width="1.8"/><path d="M8.45 4.6 V11.2" stroke="#3388cc" stroke-width="1.9"/></svg>
<svg style="left:634.3px;top:217.5px;" width="6" height="5.4" viewBox="0 0 6 5.4"><path d="M1.6 2.4 V1.7 C1.6 .2 4.4 .2 4.4 1.7 V2.4" fill="none" stroke="#000" stroke-width="1"/><rect x=".2" y="2.1" width="5.6" height="3.2" fill="#000"/><rect x="2.5" y="3" width="1.1" height="1.3" fill="#fff"/></svg>
<span id="t47" class="t" style="left:650px;top:210.50px;font-size:7.9px;line-height:12px;color:#1c1c1c;letter-spacing:-0.079px;">Small black text</span>
<svg style="left:636px;top:223.8px;" width="13.559999999999999" height="13.559999999999999" viewBox="0 0 12 12"><path d="M2.1 0 V7.2 Q2.1 8.7 4.3 8.5" fill="none" stroke="#98d0f6" stroke-width="1.9"/><path d="M0 3.3 H4.5" stroke="#98d0f6" stroke-width="1.4"/><path d="M5.6 4.6 H11.3" stroke="#3388cc" stroke-width="1.8"/><path d="M8.45 4.6 V11.2" stroke="#3388cc" stroke-width="1.9"/></svg>
<span id="t48" class="t" style="left:650px;top:223.50px;font-size:7.9px;line-height:12px;color:#1c1c1c;letter-spacing:-0.098px;">Text is smaller th</span>
<svg style="left:636px;top:237.3px;" width="13.559999999999999" height="13.559999999999999" viewBox="0 0 12 12"><path d="M2.1 0 V7.2 Q2.1 8.7 4.3 8.5" fill="none" stroke="#98d0f6" stroke-width="1.9"/><path d="M0 3.3 H4.5" stroke="#98d0f6" stroke-width="1.4"/><path d="M5.6 4.6 H11.3" stroke="#3388cc" stroke-width="1.8"/><path d="M8.45 4.6 V11.2" stroke="#3388cc" stroke-width="1.9"/></svg>
<svg style="left:634.3px;top:244.5px;" width="6" height="5.4" viewBox="0 0 6 5.4"><path d="M1.6 2.4 V1.7 C1.6 .2 4.4 .2 4.4 1.7 V2.4" fill="none" stroke="#000" stroke-width="1"/><rect x=".2" y="2.1" width="5.6" height="3.2" fill="#000"/><rect x="2.5" y="3" width="1.1" height="1.3" fill="#fff"/></svg>
<span id="t49" class="t" style="left:650px;top:237.50px;font-size:7.9px;line-height:12px;color:#1c1c1c;letter-spacing:-0.098px;">Text is smaller th</span>
<svg style="left:636px;top:250.79999999999998px;" width="13.559999999999999" height="13.559999999999999" viewBox="0 0 12 12"><path d="M2.1 0 V7.2 Q2.1 8.7 4.3 8.5" fill="none" stroke="#98d0f6" stroke-width="1.9"/><path d="M0 3.3 H4.5" stroke="#98d0f6" stroke-width="1.4"/><path d="M5.6 4.6 H11.3" stroke="#3388cc" stroke-width="1.8"/><path d="M8.45 4.6 V11.2" stroke="#3388cc" stroke-width="1.9"/></svg>
<span id="t50" class="t" style="left:650px;top:250.50px;font-size:7.9px;line-height:12px;color:#1c1c1c;letter-spacing:-0.098px;">Text is smaller th</span>
<svg style="left:636px;top:264.29999999999995px;" width="13.559999999999999" height="13.559999999999999" viewBox="0 0 12 12"><path d="M2.1 0 V7.2 Q2.1 8.7 4.3 8.5" fill="none" stroke="#98d0f6" stroke-width="1.9"/><path d="M0 3.3 H4.5" stroke="#98d0f6" stroke-width="1.4"/><path d="M5.6 4.6 H11.3" stroke="#3388cc" stroke-width="1.8"/><path d="M8.45 4.6 V11.2" stroke="#3388cc" stroke-width="1.9"/></svg>
<span id="t51" class="t" style="left:650px;top:264.50px;font-size:7.9px;line-height:12px;color:#1c1c1c;letter-spacing:-0.098px;">Text is smaller th</span>
<svg style="left:636px;top:277.79999999999995px;" width="13.559999999999999" height="13.559999999999999" viewBox="0 0 12 12"><path d="M2.1 0 V7.2 Q2.1 8.7 4.3 8.5" fill="none" stroke="#98d0f6" stroke-width="1.9"/><path d="M0 3.3 H4.5" stroke="#98d0f6" stroke-width="1.4"/><path d="M5.6 4.6 H11.3" stroke="#3388cc" stroke-width="1.8"/><path d="M8.45 4.6 V11.2" stroke="#3388cc" stroke-width="1.9"/></svg>
<svg style="left:634.3px;top:285.0px;" width="6" height="5.4" viewBox="0 0 6 5.4"><path d="M1.6 2.4 V1.7 C1.6 .2 4.4 .2 4.4 1.7 V2.4" fill="none" stroke="#000" stroke-width="1"/><rect x=".2" y="2.1" width="5.6" height="3.2" fill="#000"/><rect x="2.5" y="3" width="1.1" height="1.3" fill="#fff"/></svg>
<span id="t52" class="t" style="left:650px;top:277.50px;font-size:7.9px;line-height:12px;color:#1c1c1c;letter-spacing:-0.097px;">Text smaller than</span>
<svg style="left:636px;top:291.29999999999995px;" width="13.559999999999999" height="13.559999999999999" viewBox="0 0 12 12"><path d="M2.1 0 V7.2 Q2.1 8.7 4.3 8.5" fill="none" stroke="#98d0f6" stroke-width="1.9"/><path d="M0 3.3 H4.5" stroke="#98d0f6" stroke-width="1.4"/><path d="M5.6 4.6 H11.3" stroke="#3388cc" stroke-width="1.8"/><path d="M8.45 4.6 V11.2" stroke="#3388cc" stroke-width="1.9"/></svg>
<svg style="left:634.3px;top:298.5px;" width="6" height="5.4" viewBox="0 0 6 5.4"><path d="M1.6 2.4 V1.7 C1.6 .2 4.4 .2 4.4 1.7 V2.4" fill="none" stroke="#000" stroke-width="1"/><rect x=".2" y="2.1" width="5.6" height="3.2" fill="#000"/><rect x="2.5" y="3" width="1.1" height="1.3" fill="#fff"/></svg>
<span id="t53" class="t" style="left:650px;top:291.50px;font-size:7.9px;line-height:12px;color:#1c1c1c;letter-spacing:-0.097px;">Text smaller than</span>
<svg style="left:636px;top:304.79999999999995px;" width="13.559999999999999" height="13.559999999999999" viewBox="0 0 12 12"><path d="M2.1 0 V7.2 Q2.1 8.7 4.3 8.5" fill="none" stroke="#98d0f6" stroke-width="1.9"/><path d="M0 3.3 H4.5" stroke="#98d0f6" stroke-width="1.4"/><path d="M5.6 4.6 H11.3" stroke="#3388cc" stroke-width="1.8"/><path d="M8.45 4.6 V11.2" stroke="#3388cc" stroke-width="1.9"/></svg>
<svg style="left:634.3px;top:312.0px;" width="6" height="5.4" viewBox="0 0 6 5.4"><path d="M1.6 2.4 V1.7 C1.6 .2 4.4 .2 4.4 1.7 V2.4" fill="none" stroke="#000" stroke-width="1"/><rect x=".2" y="2.1" width="5.6" height="3.2" fill="#000"/><rect x="2.5" y="3" width="1.1" height="1.3" fill="#fff"/></svg>
<span id="t54" class="t" style="left:650px;top:304.50px;font-size:7.9px;line-height:12px;color:#1c1c1c;letter-spacing:-0.097px;">Text smaller than</span>
<svg style="left:636px;top:318.29999999999995px;" width="13.559999999999999" height="13.559999999999999" viewBox="0 0 12 12"><path d="M2.1 0 V7.2 Q2.1 8.7 4.3 8.5" fill="none" stroke="#98d0f6" stroke-width="1.9"/><path d="M0 3.3 H4.5" stroke="#98d0f6" stroke-width="1.4"/><path d="M5.6 4.6 H11.3" stroke="#3388cc" stroke-width="1.8"/><path d="M8.45 4.6 V11.2" stroke="#3388cc" stroke-width="1.9"/></svg>
<svg style="left:634.3px;top:325.5px;" width="6" height="5.4" viewBox="0 0 6 5.4"><path d="M1.6 2.4 V1.7 C1.6 .2 4.4 .2 4.4 1.7 V2.4" fill="none" stroke="#000" stroke-width="1"/><rect x=".2" y="2.1" width="5.6" height="3.2" fill="#000"/><rect x="2.5" y="3" width="1.1" height="1.3" fill="#fff"/></svg>
<span id="t55" class="t" style="left:650px;top:318.50px;font-size:7.9px;line-height:12px;color:#1c1c1c;letter-spacing:-0.097px;">Text smaller than</span>
<svg style="left:636px;top:331.79999999999995px;" width="13.559999999999999" height="13.559999999999999" viewBox="0 0 12 12"><path d="M2.1 0 V7.2 Q2.1 8.7 4.3 8.5" fill="none" stroke="#98d0f6" stroke-width="1.9"/><path d="M0 3.3 H4.5" stroke="#98d0f6" stroke-width="1.4"/><path d="M5.6 4.6 H11.3" stroke="#3388cc" stroke-width="1.8"/><path d="M8.45 4.6 V11.2" stroke="#3388cc" stroke-width="1.9"/></svg>
<svg style="left:634.3px;top:339.0px;" width="6" height="5.4" viewBox="0 0 6 5.4"><path d="M1.6 2.4 V1.7 C1.6 .2 4.4 .2 4.4 1.7 V2.4" fill="none" stroke="#000" stroke-width="1"/><rect x=".2" y="2.1" width="5.6" height="3.2" fill="#000"/><rect x="2.5" y="3" width="1.1" height="1.3" fill="#fff"/></svg>
<span id="t56" class="t" style="left:650px;top:331.50px;font-size:7.9px;line-height:12px;color:#1c1c1c;letter-spacing:-0.097px;">Text smaller than</span>
<svg style="left:636px;top:345.29999999999995px;" width="13.559999999999999" height="13.559999999999999" viewBox="0 0 12 12"><path d="M2.1 0 V7.2 Q2.1 8.7 4.3 8.5" fill="none" stroke="#98d0f6" stroke-width="1.9"/><path d="M0 3.3 H4.5" stroke="#98d0f6" stroke-width="1.4"/><path d="M5.6 4.6 H11.3" stroke="#3388cc" stroke-width="1.8"/><path d="M8.45 4.6 V11.2" stroke="#3388cc" stroke-width="1.9"/></svg>
<svg style="left:634.3px;top:352.5px;" width="6" height="5.4" viewBox="0 0 6 5.4"><path d="M1.6 2.4 V1.7 C1.6 .2 4.4 .2 4.4 1.7 V2.4" fill="none" stroke="#000" stroke-width="1"/><rect x=".2" y="2.1" width="5.6" height="3.2" fill="#000"/><rect x="2.5" y="3" width="1.1" height="1.3" fill="#fff"/></svg>
<span id="t57" class="t" style="left:650px;top:345.50px;font-size:7.9px;line-height:12px;color:#1c1c1c;letter-spacing:-0.196px;">Text used as a cli</span>
<svg style="left:636px;top:358.79999999999995px;" width="13.559999999999999" height="13.559999999999999" viewBox="0 0 12 12"><path d="M2.1 0 V7.2 Q2.1 8.7 4.3 8.5" fill="none" stroke="#98d0f6" stroke-width="1.9"/><path d="M0 3.3 H4.5" stroke="#98d0f6" stroke-width="1.4"/><path d="M5.6 4.6 H11.3" stroke="#3388cc" stroke-width="1.8"/><path d="M8.45 4.6 V11.2" stroke="#3388cc" stroke-width="1.9"/></svg>
<svg style="left:634.3px;top:366.0px;" width="6" height="5.4" viewBox="0 0 6 5.4"><path d="M1.6 2.4 V1.7 C1.6 .2 4.4 .2 4.4 1.7 V2.4" fill="none" stroke="#000" stroke-width="1"/><rect x=".2" y="2.1" width="5.6" height="3.2" fill="#000"/><rect x="2.5" y="3" width="1.1" height="1.3" fill="#fff"/></svg>
<span id="t58" class="t" style="left:650px;top:358.50px;font-size:7.9px;line-height:12px;color:#1c1c1c;letter-spacing:-0.045px;">Text with stroked</span>
<svg style="left:636px;top:372.29999999999995px;" width="13.559999999999999" height="13.559999999999999" viewBox="0 0 12 12"><path d="M2.1 0 V7.2 Q2.1 8.7 4.3 8.5" fill="none" stroke="#98d0f6" stroke-width="1.9"/><path d="M0 3.3 H4.5" stroke="#98d0f6" stroke-width="1.4"/><path d="M5.6 4.6 H11.3" stroke="#3388cc" stroke-width="1.8"/><path d="M8.45 4.6 V11.2" stroke="#3388cc" stroke-width="1.9"/></svg>
<span id="t59" class="t" style="left:650px;top:372.50px;font-size:7.9px;line-height:12px;color:#1c1c1c;letter-spacing:-0.087px;">Visible text (text</span>
<svg style="left:636px;top:385.79999999999995px;" width="13.559999999999999" height="13.559999999999999" viewBox="0 0 12 12"><path d="M2.1 0 V7.2 Q2.1 8.7 4.3 8.5" fill="none" stroke="#98d0f6" stroke-width="1.9"/><path d="M0 3.3 H4.5" stroke="#98d0f6" stroke-width="1.4"/><path d="M5.6 4.6 H11.3" stroke="#3388cc" stroke-width="1.8"/><path d="M8.45 4.6 V11.2" stroke="#3388cc" stroke-width="1.9"/></svg>
<svg style="left:634.3px;top:393.0px;" width="6" height="5.4" viewBox="0 0 6 5.4"><path d="M1.6 2.4 V1.7 C1.6 .2 4.4 .2 4.4 1.7 V2.4" fill="none" stroke="#000" stroke-width="1"/><rect x=".2" y="2.1" width="5.6" height="3.2" fill="#000"/><rect x="2.5" y="3" width="1.1" height="1.3" fill="#fff"/></svg>
<span id="t60" class="t" style="left:650px;top:385.50px;font-size:7.9px;line-height:12px;color:#1c1c1c;letter-spacing:-0.181px;">White text smalle</span>
<svg style="left:636px;top:399.29999999999995px;" width="13.559999999999999" height="13.559999999999999" viewBox="0 0 12 12"><path d="M2.1 0 V7.2 Q2.1 8.7 4.3 8.5" fill="none" stroke="#98d0f6" stroke-width="1.9"/><path d="M0 3.3 H4.5" stroke="#98d0f6" stroke-width="1.4"/><path d="M5.6 4.6 H11.3" stroke="#3388cc" stroke-width="1.8"/><path d="M8.45 4.6 V11.2" stroke="#3388cc" stroke-width="1.9"/></svg>
<svg style="left:634.3px;top:406.5px;" width="6" height="5.4" viewBox="0 0 6 5.4"><path d="M1.6 2.4 V1.7 C1.6 .2 4.4 .2 4.4 1.7 V2.4" fill="none" stroke="#000" stroke-width="1"/><rect x=".2" y="2.1" width="5.6" height="3.2" fill="#000"/><rect x="2.5" y="3" width="1.1" height="1.3" fill="#fff"/></svg>
<span id="t61" class="t" style="left:650px;top:399.50px;font-size:7.9px;line-height:12px;color:#1c1c1c;letter-spacing:-0.181px;">White text smalle</span>
<svg style="left:636px;top:412.79999999999995px;" width="13.559999999999999" height="13.559999999999999" viewBox="0 0 12 12"><path d="M2.1 0 V7.2 Q2.1 8.7 4.3 8.5" fill="none" stroke="#98d0f6" stroke-width="1.9"/><path d="M0 3.3 H4.5" stroke="#98d0f6" stroke-width="1.4"/><path d="M5.6 4.6 H11.3" stroke="#3388cc" stroke-width="1.8"/><path d="M8.45 4.6 V11.2" stroke="#3388cc" stroke-width="1.9"/></svg>
<svg style="left:634.3px;top:420.0px;" width="6" height="5.4" viewBox="0 0 6 5.4"><path d="M1.6 2.4 V1.7 C1.6 .2 4.4 .2 4.4 1.7 V2.4" fill="none" stroke="#000" stroke-width="1"/><rect x=".2" y="2.1" width="5.6" height="3.2" fill="#000"/><rect x="2.5" y="3" width="1.1" height="1.3" fill="#fff"/></svg>
<span id="t62" class="t" style="left:650px;top:412.50px;font-size:7.9px;line-height:12px;color:#1c1c1c;letter-spacing:-0.181px;">White text smalle</span>
<svg style="left:636px;top:426.29999999999995px;" width="13.559999999999999" height="13.559999999999999" viewBox="0 0 12 12"><path d="M2.1 0 V7.2 Q2.1 8.7 4.3 8.5" fill="none" stroke="#98d0f6" stroke-width="1.9"/><path d="M0 3.3 H4.5" stroke="#98d0f6" stroke-width="1.4"/><path d="M5.6 4.6 H11.3" stroke="#3388cc" stroke-width="1.8"/><path d="M8.45 4.6 V11.2" stroke="#3388cc" stroke-width="1.9"/></svg>
<svg style="left:634.3px;top:433.5px;" width="6" height="5.4" viewBox="0 0 6 5.4"><path d="M1.6 2.4 V1.7 C1.6 .2 4.4 .2 4.4 1.7 V2.4" fill="none" stroke="#000" stroke-width="1"/><rect x=".2" y="2.1" width="5.6" height="3.2" fill="#000"/><rect x="2.5" y="3" width="1.1" height="1.3" fill="#fff"/></svg>
<span id="t63" class="t" style="left:650px;top:426.50px;font-size:7.9px;line-height:12px;color:#1c1c1c;letter-spacing:-0.181px;">White text smalle</span>
<svg style="left:635px;top:439.4px;" width="13.5" height="12.5" viewBox="0 0 13.5 12.5"><g fill="none" stroke="#e6aee0"><path d="M.9 8.5 L3.7 .6" stroke-width=".8"/><path d="M3.7 .6 L6.7 8.5" stroke-width="1.3"/><path d="M2 5.7 H5.4 M0 8.6 H2.2 M5.3 8.6 H7.6" stroke-width=".8"/></g><g fill="none" stroke="#a3209c"><path d="M6.2 11.6 L9 3.6" stroke-width="1"/><path d="M9 3.4 L11.6 11.6" stroke-width="2.2"/><path d="M7.2 8.8 H10.6 M5.2 11.7 H7.6 M9.8 11.7 H13" stroke-width="1"/></g></svg>
<span id="t64" class="t" style="left:650px;top:439.50px;font-size:7.9px;line-height:12px;color:#1c1c1c;letter-spacing:-0.139px;">CID (double byte</span>
<svg style="left:635px;top:452.9px;" width="13.5" height="12.5" viewBox="0 0 13.5 12.5"><g fill="none" stroke="#e6aee0"><path d="M.9 8.5 L3.7 .6" stroke-width=".8"/><path d="M3.7 .6 L6.7 8.5" stroke-width="1.3"/><path d="M2 5.7 H5.4 M0 8.6 H2.2 M5.3 8.6 H7.6" stroke-width=".8"/></g><g fill="none" stroke="#a3209c"><path d="M6.2 11.6 L9 3.6" stroke-width="1"/><path d="M9 3.4 L11.6 11.6" stroke-width="2.2"/><path d="M7.2 8.8 H10.6 M5.2 11.7 H7.6 M9.8 11.7 H13" stroke-width="1"/></g></svg>
<svg style="left:634.3px;top:460.2px;" width="6" height="5.4" viewBox="0 0 6 5.4"><path d="M1.6 2.4 V1.7 C1.6 .2 4.4 .2 4.4 1.7 V2.4" fill="none" stroke="#000" stroke-width="1"/><rect x=".2" y="2.1" width="5.6" height="3.2" fill="#000"/><rect x="2.5" y="3" width="1.1" height="1.3" fill="#fff"/></svg>
<span id="t65" class="t" style="left:650px;top:453.50px;font-size:7.9px;line-height:12px;color:#1c1c1c;letter-spacing:-0.111px;">Courier inside Tr</span>
<svg style="left:635px;top:466.4px;" width="13.5" height="12.5" viewBox="0 0 13.5 12.5"><g fill="none" stroke="#e6aee0"><path d="M.9 8.5 L3.7 .6" stroke-width=".8"/><path d="M3.7 .6 L6.7 8.5" stroke-width="1.3"/><path d="M2 5.7 H5.4 M0 8.6 H2.2 M5.3 8.6 H7.6" stroke-width=".8"/></g><g fill="none" stroke="#a3209c"><path d="M6.2 11.6 L9 3.6" stroke-width="1"/><path d="M9 3.4 L11.6 11.6" stroke-width="2.2"/><path d="M7.2 8.8 H10.6 M5.2 11.7 H7.6 M9.8 11.7 H13" stroke-width="1"/></g></svg>
<svg style="left:634.3px;top:473.7px;" width="6" height="5.4" viewBox="0 0 6 5.4"><path d="M1.6 2.4 V1.7 C1.6 .2 4.4 .2 4.4 1.7 V2.4" fill="none" stroke="#000" stroke-width="1"/><rect x=".2" y="2.1" width="5.6" height="3.2" fill="#000"/><rect x="2.5" y="3" width="1.1" height="1.3" fill="#fff"/></svg>
<span id="t66" class="t" style="left:650px;top:466.50px;font-size:7.9px;line-height:12px;color:#1c1c1c;letter-spacing:-0.201px;">Encoding entry p</span>
<svg style="left:635px;top:479.9px;" width="13.5" height="12.5" viewBox="0 0 13.5 12.5"><g fill="none" stroke="#e6aee0"><path d="M.9 8.5 L3.7 .6" stroke-width=".8"/><path d="M3.7 .6 L6.7 8.5" stroke-width="1.3"/><path d="M2 5.7 H5.4 M0 8.6 H2.2 M5.3 8.6 H7.6" stroke-width=".8"/></g><g fill="none" stroke="#a3209c"><path d="M6.2 11.6 L9 3.6" stroke-width="1"/><path d="M9 3.4 L11.6 11.6" stroke-width="2.2"/><path d="M7.2 8.8 H10.6 M5.2 11.7 H7.6 M9.8 11.7 H13" stroke-width="1"/></g></svg>
<span id="t67" class="t" style="left:650px;top:480.50px;font-size:7.9px;line-height:12px;color:#1c1c1c;letter-spacing:-0.074px;">Font is not valid</span>
<svg style="left:635px;top:493.4px;" width="13.5" height="12.5" viewBox="0 0 13.5 12.5"><g fill="none" stroke="#e6aee0"><path d="M.9 8.5 L3.7 .6" stroke-width=".8"/><path d="M3.7 .6 L6.7 8.5" stroke-width="1.3"/><path d="M2 5.7 H5.4 M0 8.6 H2.2 M5.3 8.6 H7.6" stroke-width=".8"/></g><g fill="none" stroke="#a3209c"><path d="M6.2 11.6 L9 3.6" stroke-width="1"/><path d="M9 3.4 L11.6 11.6" stroke-width="2.2"/><path d="M7.2 8.8 H10.6 M5.2 11.7 H7.6 M9.8 11.7 H13" stroke-width="1"/></g></svg>
<svg style="left:634.3px;top:500.7px;" width="6" height="5.4" viewBox="0 0 6 5.4"><path d="M1.6 2.4 V1.7 C1.6 .2 4.4 .2 4.4 1.7 V2.4" fill="none" stroke="#000" stroke-width="1"/><rect x=".2" y="2.1" width="5.6" height="3.2" fill="#000"/><rect x="2.5" y="3" width="1.1" height="1.3" fill="#fff"/></svg>
<span id="t68" class="t" style="left:650px;top:493.50px;font-size:7.9px;line-height:12px;color:#1c1c1c;letter-spacing:-0.174px;">Font name is not</span>
<div style="left:632.5px;top:519.5px;width:16px;height:16px;background:#f0f0f0;border:1px solid;border-color:#fff #8c8c8c #8c8c8c #fff;box-shadow:0 0 0 .5px #d8d8d8;"></div>
<svg style="left:632.5px;top:519.5px;" width="16" height="16" viewBox="0 0 16 16"><path d="M2.5 8 L7.5 3.2 L7.5 5.8 L13 5.8 L13 10.2 L7.5 10.2 L7.5 12.8Z" fill="#6ec0f6"/></svg>
<div style="left:658.5px;top:519.5px;width:16px;height:16px;background:#f0f0f0;border:1px solid;border-color:#fff #8c8c8c #8c8c8c #fff;box-shadow:0 0 0 .5px #d8d8d8;"></div>
<svg style="left:658.5px;top:519.5px;" width="16" height="16" viewBox="0 0 16 16"><rect x="4.6" y="4.7" width="7.2" height="7.2" fill="#a8d8f8"/><path d="M6.5 3.2 L6.5 10 M3.2 6.6 L9.8 6.6" stroke="#1838c8" stroke-width="1.9"/></svg>
<div style="left:685px;top:519.5px;width:16px;height:16px;background:#f0f0f0;border:1px solid;border-color:#fff #8c8c8c #8c8c8c #fff;box-shadow:0 0 0 .5px #d8d8d8;"></div>
<svg style="left:685px;top:519.5px;" width="16" height="16" viewBox="0 0 16 16"><rect x="3" y="3" width="7" height="7" fill="#8ccdf6"/><rect x="7" y="7" width="6.5" height="6.5" fill="#7ec4f4" opacity=".85"/></svg>
<div style="left:706px;top:168px;width:620px;height:480px;background:#aacdee;border:1px solid #5a6b7c;border-radius:6px 0 0 0;box-shadow:0 0 7px rgba(0,0,0,.45);"></div>
<div style="left:707px;top:169px;width:620px;height:22px;border-radius:5px 0 0 0;border-top:1px solid #e8f3fc;border-left:1px solid #e8f3fc;background:linear-gradient(180deg,#badaf6 0%,#afd2f3 45%,#a6ccf0 100%);"></div>
<div style="left:707px;top:190px;width:5px;height:460px;border-left:1px solid #dcecf9;background:#a9cdee;"></div>
<div style="left:712px;top:171px;width:130px;height:4px;background:#8fb4d8;filter:blur(2px);opacity:.35;"></div>
<div style="left:1178px;top:169px;width:5px;height:21px;background:#6f93b8;filter:blur(1.5px);opacity:.6;"></div>
<div style="left:865px;top:169px;width:12px;height:21px;background:#c4dcf2;filter:blur(2px);opacity:.7;"></div>
<div style="left:897px;top:169px;width:24px;height:21px;background:#bdd8f1;filter:blur(2px);opacity:.6;"></div>
<span id="t69" class="t" style="left:712.6px;top:173.00px;font-size:9px;line-height:12px;color:#111;text-shadow:0 0 4px #fff,0 0 6px #fff;letter-spacing:-0.169px;">Preflight: Edit Check</span>
<div style="left:711.5px;top:189.5px;width:600px;height:450px;background:#f0f0f0;border:1px solid #6f8296;"></div>
<span id="t70" class="t" style="left:717px;top:194.50px;font-size:8.2px;line-height:12px;color:#1c1c1c;letter-spacing:-0.248px;">When check fires, report as:</span>
<div style="left:717px;top:211px;width:121px;height:16.6px;background:#fff;border:1px solid #7a7a7a;border-bottom-color:#b5b5b5;border-right-color:#a0a0a0;"></div>
<div style="left:821px;top:212px;width:1px;height:14.6px;background:#b0b0b0;"></div>
<svg style="left:824.3px;top:215.3px;" width="10.0" height="7.0" viewBox="0 0 10 7"><defs><linearGradient id="og829_218" x1="0" y1="0" x2="0" y2="1"><stop offset="0" stop-color="#f7941d"/><stop offset="1" stop-color="#f15a22"/></linearGradient></defs><path d="M.3 .4 L9.7 .4 L5 6.6Z" fill="url(#og829_218)"/></svg>
<div style="left:721.3px;top:213.5px;width:1px;height:11.5px;background:#000;"></div>
<span id="t71" class="t" style="left:722px;top:212.50px;font-size:7.9px;line-height:12px;color:#1c1c1c;letter-spacing:-0.203px;">Толщина линии не равна за,</span>
<div style="left:716.8px;top:232.7px;width:10px;height:10.2px;border:1px solid #a2a2a2;background:linear-gradient(135deg,#e4e4e4,#fafafa 70%);"></div>
<span id="t72" class="t" style="left:729px;top:233.50px;font-size:8.2px;line-height:12px;color:#1c1c1c;letter-spacing:-0.189px;">When it does not fire, report as:</span>
<div style="left:727px;top:249.5px;width:111px;height:16.6px;background:#fff;border:1px solid #a0a0a0;border-bottom-color:#b5b5b5;border-right-color:#a0a0a0;"></div>
<div style="left:821px;top:250.5px;width:16px;height:14.6px;background:#e9e9e9;"></div>
<div style="left:821px;top:250.5px;width:1px;height:14.6px;background:#c0c0c0;"></div>
<svg style="left:824.3px;top:254.5px;" width="10.0" height="7.0" viewBox="0 0 10 7"><defs><linearGradient id="og829_258" x1="0" y1="0" x2="0" y2="1"><stop offset="0" stop-color="#a8a8a8"/><stop offset="1" stop-color="#8a8a8a"/></linearGradient></defs><path d="M.3 .4 L9.7 .4 L5 6.6Z" fill="url(#og829_258)"/></svg>
<span id="t73" class="t" style="left:717px;top:271.50px;font-size:8.2px;line-height:12px;color:#1c1c1c;letter-spacing:-0.244px;">Explanation for this check:</span>
<div style="left:717px;top:287px;width:121px;height:96.5px;background:#fff;border:1px solid #7a7a7a;border-bottom-color:#b5b5b5;border-right-color:#a0a0a0;"></div>
<div style="left:808px;top:288px;width:13px;height:94.5px;background:#f0f0f0;"></div>
<div style="left:821px;top:288px;width:1px;height:94.5px;background:#b0b0b0;"></div>
<div style="left:812.5px;top:294.5px;width:0;height:0;border-left:2.4px solid transparent;border-right:2.4px solid transparent;border-bottom:2.6px solid #9a9a9a;"></div>
<div style="left:812.5px;top:375px;width:0;height:0;border-left:2.4px solid transparent;border-right:2.4px solid transparent;border-top:2.6px solid #9a9a9a;"></div>
<svg style="left:824.3px;top:331.8px;" width="10.0" height="7.0" viewBox="0 0 10 7"><defs><linearGradient id="og829_335" x1="0" y1="0" x2="0" y2="1"><stop offset="0" stop-color="#f7941d"/><stop offset="1" stop-color="#f15a22"/></linearGradient></defs><path d="M.3 .4 L9.7 .4 L5 6.6Z" fill="url(#og829_335)"/></svg>
<span id="t74" class="t" style="left:719.3px;top:288.50px;font-size:7.9px;line-height:12px;color:#1c1c1c;letter-spacing:-0.124px;">Толщина линии не</span>
<span id="t75" class="t" style="left:719.3px;top:298.50px;font-size:7.9px;line-height:12px;color:#1c1c1c;letter-spacing:-0.176px;">равна заданной в</span>
<span id="t76" class="t" style="left:719.3px;top:309.50px;font-size:7.9px;line-height:12px;color:#1c1c1c;letter-spacing:-0.191px;">NeedThick</span>
<div style="left:716.8px;top:388.7px;width:10px;height:10.2px;border:1px solid #a2a2a2;background:linear-gradient(135deg,#e4e4e4,#fafafa 70%);"></div>
<span id="t77" class="t" style="left:729px;top:389.50px;font-size:8.2px;line-height:12px;color:#1c1c1c;letter-spacing:-0.111px;">Fire if any condition is met</span>
<div style="left:716.8px;top:406.7px;width:10px;height:10.2px;border:1px solid #a2a2a2;background:linear-gradient(135deg,#e4e4e4,#fafafa 70%);"></div>
<span id="t78" class="t" style="left:729px;top:407.50px;font-size:8.2px;line-height:12px;color:#1c1c1c;letter-spacing:-0.181px;">Invert check result</span>
<span id="t79" class="t" style="left:717px;top:423.50px;font-size:8.2px;line-height:12px;color:#1c1c1c;letter-spacing:-0.227px;">Apply this check to:</span>
<div style="left:716.8px;top:440.2px;width:10px;height:10.2px;border:1px solid #a2a2a2;background:linear-gradient(135deg,#e4e4e4,#fafafa 70%);"></div>
<svg style="left:716.8px;top:440.2px;" width="10" height="10" viewBox="0 0 10 10"><path d="M2.2 4.8 L4.2 7.6 L7.8 1.8" fill="none" stroke="#2a3f8f" stroke-width="1.4"/></svg>
<span id="t80" class="t" style="left:729px;top:440.50px;font-size:8.2px;line-height:12px;color:#1c1c1c;letter-spacing:-0.335px;">Page contents</span>
<div style="left:716.8px;top:457.7px;width:10px;height:10.2px;border:1px solid #a2a2a2;background:linear-gradient(135deg,#e4e4e4,#fafafa 70%);"></div>
<span id="t81" class="t" style="left:729px;top:457.50px;font-size:8.2px;line-height:12px;color:#1c1c1c;letter-spacing:-0.195px;">Appearance of annotations</span>
<div style="left:716.8px;top:475.2px;width:10px;height:10.2px;border:1px solid #a2a2a2;background:linear-gradient(135deg,#e4e4e4,#fafafa 70%);"></div>
<span id="t82" class="t" style="left:729px;top:475.50px;font-size:8.2px;line-height:12px;color:#1c1c1c;letter-spacing:-0.172px;">Appearance of form fields</span>
<div style="left:716.8px;top:492.7px;width:10px;height:10.2px;border:1px solid #a2a2a2;background:linear-gradient(135deg,#e4e4e4,#fafafa 70%);"></div>
<span id="t83" class="t" style="left:729px;top:493.50px;font-size:8.2px;line-height:12px;color:#1c1c1c;letter-spacing:-0.250px;">Soft masks</span>
<div style="left:716.8px;top:510.2px;width:10px;height:10.2px;border:1px solid #a2a2a2;background:linear-gradient(135deg,#e4e4e4,#fafafa 70%);"></div>
<svg style="left:716.8px;top:510.2px;" width="10" height="10" viewBox="0 0 10 10"><path d="M2.2 4.8 L4.2 7.6 L7.8 1.8" fill="none" stroke="#2a3f8f" stroke-width="1.4"/></svg>
<span id="t84" class="t" style="left:729px;top:510.50px;font-size:8.2px;line-height:12px;color:#1c1c1c;letter-spacing:-0.087px;">Current file</span>
<div style="left:716.8px;top:527.7px;width:10px;height:10.2px;border:1px solid #a2a2a2;background:linear-gradient(135deg,#e4e4e4,#fafafa 70%);"></div>
<span id="t85" class="t" style="left:729px;top:527.50px;font-size:8.2px;line-height:12px;color:#1c1c1c;letter-spacing:-0.246px;">Embedded files</span>
<div style="left:716.8px;top:545.2px;width:10px;height:10.2px;border:1px solid #a2a2a2;background:linear-gradient(135deg,#e4e4e4,#fafafa 70%);"></div>
<svg style="left:716.8px;top:545.2px;" width="10" height="10" viewBox="0 0 10 10"><path d="M2.2 4.8 L4.2 7.6 L7.8 1.8" fill="none" stroke="#2a3f8f" stroke-width="1.4"/></svg>
<span id="t86" class="t" style="left:729px;top:545.50px;font-size:8.2px;line-height:12px;color:#1c1c1c;letter-spacing:-0.141px;">Ignore objects outside</span>
<div style="left:727px;top:562px;width:115.5px;height:14.6px;border:1px solid #8c8c8c;border-radius:1.5px;background:linear-gradient(180deg,#f4f4f4 0%,#ebebeb 50%,#dcdcdc 55%,#d4d4d4 100%);box-shadow:inset 0 0 0 1px #fafafa;"></div>
<div style="left:832.5px;top:568px;width:0;height:0;border-left:2.8px solid transparent;border-right:2.8px solid transparent;border-top:3.2px solid #111;"></div>
<span id="t87" class="t" style="left:729.5px;top:564.50px;font-size:8.2px;line-height:12px;color:#1c1c1c;letter-spacing:-0.310px;">TrimBox</span>
<span id="t88" class="t" style="left:717px;top:583.50px;font-size:8.2px;line-height:12px;color:#1c1c1c;letter-spacing:-0.201px;">Output Intent Scope</span>
<div style="left:716.5px;top:595px;width:126px;height:14.5px;background:#f0f0f0;border:1px solid;border-color:#fdfdfd #8a8a8a #8a8a8a #fdfdfd;box-shadow:.5px .5px 0 .3px #b0b0b0;"></div>
<span id="t89" class="t" style="left:719px;top:597.50px;font-size:8.2px;line-height:12px;color:#1c1c1c;letter-spacing:-0.166px;">Document</span>
<div style="left:820px;top:601px;width:0;height:0;border-left:2.3px solid transparent;border-right:2.3px solid transparent;border-top:2.6px solid #111;"></div>
<div style="left:825.5px;top:596px;width:1px;height:12px;background:#a0a0a0;"></div>
<svg style="left:828.3px;top:598.5px;" width="10.0" height="7.0" viewBox="0 0 10 7"><defs><linearGradient id="og833_602" x1="0" y1="0" x2="0" y2="1"><stop offset="0" stop-color="#f7941d"/><stop offset="1" stop-color="#f15a22"/></linearGradient></defs><path d="M.3 .4 L9.7 .4 L5 6.6Z" fill="url(#og833_602)"/></svg>
<div style="left:716.8px;top:615.2px;width:10px;height:10.2px;border:1px solid #a2a2a2;background:linear-gradient(135deg,#e4e4e4,#fafafa 70%);"></div>
<span id="t90" class="t" style="left:729px;top:616.50px;font-size:8.2px;line-height:12px;color:#1c1c1c;letter-spacing:-0.202px;">Hide in list of Checks</span>
<div style="left:847.8px;top:192px;width:1px;height:440px;background:#c4c4c4;"></div>
<div style="left:850.2px;top:192px;width:1px;height:440px;background:#c4c4c4;"></div>
<div style="left:848.8px;top:192px;width:1.4px;height:440px;background:#f8f8f8;"></div>
<span id="t91" class="t" style="left:857px;top:194.50px;font-size:8.2px;line-height:12px;color:#1c1c1c;letter-spacing:-0.255px;">Group:</span>
<div style="left:855.5px;top:210px;width:142px;height:121.5px;background:#fff;border:1px solid #a8a8a8;"></div>
<div style="left:871px;top:211px;width:113px;height:13.4px;background:#c2c2c2;"></div>
<div style="left:861.0px;top:219.2px;width:1.7px;height:1.7px;background:#000;border-radius:1px;"></div>
<div style="left:863.7px;top:219.2px;width:1.7px;height:1.7px;background:#000;border-radius:1px;"></div>
<div style="left:866.4px;top:219.2px;width:1.7px;height:1.7px;background:#000;border-radius:1px;"></div>
<span id="t92" class="t" style="left:872px;top:212.50px;font-size:7.9px;line-height:12px;color:#1c1c1c;letter-spacing:0.406px;">All</span>
<span id="t93" class="t" style="left:872px;top:225.50px;font-size:7.9px;line-height:12px;color:#1c1c1c;letter-spacing:-0.121px;">Text</span>
<span id="t94" class="t" style="left:872px;top:239.50px;font-size:7.9px;line-height:12px;color:#1c1c1c;letter-spacing:-0.199px;">Font</span>
<span id="t95" class="t" style="left:872px;top:252.50px;font-size:7.9px;line-height:12px;color:#1c1c1c;letter-spacing:-0.188px;">Image</span>
<span id="t96" class="t" style="left:872px;top:266.50px;font-size:7.9px;line-height:12px;color:#1c1c1c;letter-spacing:-0.135px;">Colors</span>
<span id="t97" class="t" style="left:872px;top:279.50px;font-size:7.9px;line-height:12px;color:#1c1c1c;letter-spacing:-0.255px;">ICC color spaces</span>
<span id="t98" class="t" style="left:872px;top:293.50px;font-size:7.9px;line-height:12px;color:#1c1c1c;letter-spacing:-0.008px;">Graphic state properties for fill</span>
<span id="t99" class="t" style="left:872px;top:306.50px;font-size:7.9px;line-height:12px;color:#1c1c1c;letter-spacing:-0.051px;">Graphic state properties for strol</span>
<span id="t100" class="t" style="left:872px;top:320.50px;font-size:7.9px;line-height:12px;color:#1c1c1c;letter-spacing:-0.109px;">General Graphic state properties</span>
<svg style="left:860px;top:225.5px;" width="12.0" height="12.0" viewBox="0 0 12 12"><path d="M2.1 0 V7.2 Q2.1 8.7 4.3 8.5" fill="none" stroke="#98d0f6" stroke-width="1.9"/><path d="M0 3.3 H4.5" stroke="#98d0f6" stroke-width="1.4"/><path d="M5.6 4.6 H11.3" stroke="#3388cc" stroke-width="1.8"/><path d="M8.45 4.6 V11.2" stroke="#3388cc" stroke-width="1.9"/></svg>
<svg style="left:858.5px;top:237px;transform:scale(.92);transform-origin:0 0;" width="13.5" height="12.5" viewBox="0 0 13.5 12.5"><g fill="none" stroke="#e6aee0"><path d="M.9 8.5 L3.7 .6" stroke-width=".8"/><path d="M3.7 .6 L6.7 8.5" stroke-width="1.3"/><path d="M2 5.7 H5.4 M0 8.6 H2.2 M5.3 8.6 H7.6" stroke-width=".8"/></g><g fill="none" stroke="#a3209c"><path d="M6.2 11.6 L9 3.6" stroke-width="1"/><path d="M9 3.4 L11.6 11.6" stroke-width="2.2"/><path d="M7.2 8.8 H10.6 M5.2 11.7 H7.6 M9.8 11.7 H13" stroke-width="1"/></g></svg>
<svg style="left:858px;top:251.2px;" width="13" height="12.4" viewBox="0 0 13 12.4"><rect x=".6" y=".6" width="11.8" height="11" rx="1.2" fill="#cde6f8" stroke="#9c9c9c" stroke-width="1.2"/><rect x="1.4" y="8.6" width="10.2" height="2.4" fill="#4fd04f"/><circle cx="7.4" cy="4.6" r="2.9" fill="#2a9f2a"/><rect x="6.8" y="7" width="1.2" height="2" fill="#8a6a3a"/></svg>
<svg style="left:858.3px;top:264.8px;" width="13" height="12.2" viewBox="0 0 13 12.2"><rect x=".7" y=".5" width="3.8" height="11.2" fill="#fbe870" stroke="#a040b0" stroke-width="1"/><path d="M5 8.2 L9.6 1.4 L11.8 3.2 L7.2 9.4Z" fill="#f3b8d6" stroke="#9040b0" stroke-width=".8"/><rect x="4.8" y="8.6" width="7.6" height="3" fill="#e03030" stroke="#a040b0" stroke-width=".7"/></svg>
<svg style="left:858.3px;top:278.2px;" width="13" height="12.6" viewBox="0 0 13 12.6"><path d="M.8 11.9 L.8 .8 Q11.8 2 12.2 11.9Z" fill="#22bb22" stroke="#1a8a1a" stroke-width=".8"/><path d="M2.4 10.6 L4.8 2 M2.4 10.6 L8.8 4.4 M2.4 10.6 L11.4 8.6" stroke="#d4f8d4" stroke-width=".9"/><rect x="1.4" y="9.2" width="2" height="2" fill="#fff" stroke="#3030c0" stroke-width=".6"/></svg>
<svg style="left:859.7px;top:293.5px;" width="10.5" height="10" viewBox="0 0 10.5 10"><rect x="3.8" y=".5" width="6" height="6.4" fill="#a8e4a8" stroke="#34b034" stroke-width="1"/><circle cx="2.9" cy="3.9" r="2.6" fill="#ffd9a0" stroke="#f0a030" stroke-width="1"/><path d="M1.2 9.4 L5.2 4.6 L9.2 9.4Z" fill="#b870e0" stroke="#a020c8" stroke-width="1.1"/></svg>
<svg style="left:859.7px;top:307px;" width="10.5" height="10" viewBox="0 0 10.5 10"><rect x="3.8" y=".5" width="6" height="6.4" fill="#fff" stroke="#34b034" stroke-width="1"/><circle cx="2.9" cy="3.9" r="2.6" fill="#fff" stroke="#f0a030" stroke-width="1"/><path d="M1.2 9.4 L5.2 4.6 L9.2 9.4Z" fill="#dcb0f0" stroke="#a020c8" stroke-width="1.1"/></svg>
<svg style="left:859.6px;top:320px;" width="11" height="11.4" viewBox="0 0 11 11.4"><g fill="none" stroke-width="1.2"><path d="M.8 5.4 L5.4 .8" stroke="#222"/><path d="M5.4 .8 L10 5.4" stroke="#a030b0"/><path d="M10 5.4 L5.4 10" stroke="#3090e0"/><path d="M5.4 10.4 L3.2 8.2" stroke="#30c030"/><path d="M3.2 8.2 L.8 5.8" stroke="#f0b040"/><path d="M4.6 3.6 L8.4 7.4" stroke="#e03030"/></g></svg>
<div style="left:984px;top:211px;width:13px;height:119.5px;background:#f0f0f0;"></div>
<svg style="left:987.3px;top:214.5px;" width="7" height="5" viewBox="0 0 7 5"><path d="M.6 4 L3.5 1 L6.4 4" fill="none" stroke="#3c3c3c" stroke-width="1.4"/></svg>
<svg style="left:987.3px;top:322.5px;" width="7" height="5" viewBox="0 0 7 5"><path d="M.6 1 L3.5 4 L6.4 1" fill="none" stroke="#3c3c3c" stroke-width="1.4"/></svg>
<div style="left:985.3px;top:225px;width:10.6px;height:21px;border:1px solid #a6a6a6;border-radius:1.5px;background:linear-gradient(90deg,#ededed,#cfcfcf);"></div>
<div style="left:988px;top:233.0px;width:5.3px;height:1.1px;background:#6e6e6e;"></div>
<div style="left:988px;top:235.2px;width:5.3px;height:1.1px;background:#6e6e6e;"></div>
<div style="left:988px;top:237.4px;width:5.3px;height:1.1px;background:#6e6e6e;"></div>
<div style="left:1002px;top:192px;width:1px;height:143px;background:#c4c4c4;"></div>
<div style="left:1004px;top:192px;width:1px;height:143px;background:#c4c4c4;"></div>
<div style="left:1003px;top:192px;width:1px;height:143px;background:#f8f8f8;"></div>
<span id="t101" class="t" style="left:1011.3px;top:194.50px;font-size:8.2px;line-height:12px;color:#1c1c1c;letter-spacing:-0.302px;">Property:</span>
<div style="left:1217px;top:192px;width:100px;height:15px;background:#fff;"></div>
<span id="t102" class="t" style="left:1222.5px;top:193.50px;font-size:7.9px;line-height:12px;color:#c6c6c6;letter-spacing:-0.265px;">Find</span>
<div style="left:1011px;top:212.7px;width:300px;height:118.8px;background:#fff;border:1px solid #a8a8a8;"></div>
<div style="left:1025.5px;top:213.7px;width:290px;height:13px;background:#c2c2c2;"></div>
<div style="left:1025.5px;top:226.7px;width:290px;height:13.2px;background:#fff;border:1px solid #b9b9b9;border-top:none;"></div>
<span id="t103" class="t" style="left:1027px;top:214.50px;font-size:7.9px;line-height:12px;color:#1c1c1c;letter-spacing:-0.128px;">Can be mapped to Unicode</span>
<svg style="left:1014.4px;top:215.3px;" width="12.0" height="12.0" viewBox="0 0 12 12"><path d="M2.1 0 V7.2 Q2.1 8.7 4.3 8.5" fill="none" stroke="#98d0f6" stroke-width="1.9"/><path d="M0 3.3 H4.5" stroke="#98d0f6" stroke-width="1.4"/><path d="M5.6 4.6 H11.3" stroke="#3388cc" stroke-width="1.8"/><path d="M8.45 4.6 V11.2" stroke="#3388cc" stroke-width="1.9"/></svg>
<span id="t104" class="t" style="left:1027px;top:228.50px;font-size:7.9px;line-height:12px;color:#1c1c1c;letter-spacing:-0.081px;">All glyphs in the text can be mapped to Unicode.</span>
<span id="t105" class="t" style="left:1027px;top:241.50px;font-size:7.9px;line-height:12px;color:#1c1c1c;letter-spacing:-0.115px;">Character has ActualText entry</span>
<svg style="left:1014.4px;top:242.3px;" width="12.0" height="12.0" viewBox="0 0 12 12"><path d="M2.1 0 V7.2 Q2.1 8.7 4.3 8.5" fill="none" stroke="#98d0f6" stroke-width="1.9"/><path d="M0 3.3 H4.5" stroke="#98d0f6" stroke-width="1.4"/><path d="M5.6 4.6 H11.3" stroke="#3388cc" stroke-width="1.8"/><path d="M8.45 4.6 V11.2" stroke="#3388cc" stroke-width="1.9"/></svg>
<span id="t106" class="t" style="left:1027px;top:255.50px;font-size:7.9px;line-height:12px;color:#1c1c1c;letter-spacing:-0.136px;">Character is mapped to Unicode Private Use Area (PUA)</span>
<svg style="left:1014.4px;top:255.80000000000004px;" width="12.0" height="12.0" viewBox="0 0 12 12"><path d="M2.1 0 V7.2 Q2.1 8.7 4.3 8.5" fill="none" stroke="#98d0f6" stroke-width="1.9"/><path d="M0 3.3 H4.5" stroke="#98d0f6" stroke-width="1.4"/><path d="M5.6 4.6 H11.3" stroke="#3388cc" stroke-width="1.8"/><path d="M8.45 4.6 V11.2" stroke="#3388cc" stroke-width="1.9"/></svg>
<span id="t107" class="t" style="left:1027px;top:268.50px;font-size:7.9px;line-height:12px;color:#1c1c1c;letter-spacing:-0.103px;">Character references .notdef glyph</span>
<svg style="left:1014.4px;top:269.3px;" width="12.0" height="12.0" viewBox="0 0 12 12"><path d="M2.1 0 V7.2 Q2.1 8.7 4.3 8.5" fill="none" stroke="#98d0f6" stroke-width="1.9"/><path d="M0 3.3 H4.5" stroke="#98d0f6" stroke-width="1.4"/><path d="M5.6 4.6 H11.3" stroke="#3388cc" stroke-width="1.8"/><path d="M8.45 4.6 V11.2" stroke="#3388cc" stroke-width="1.9"/></svg>
<span id="t108" class="t" style="left:1027px;top:282.50px;font-size:7.9px;line-height:12px;color:#1c1c1c;letter-spacing:-0.046px;">Character references glyph with contours</span>
<svg style="left:1014.4px;top:282.8px;" width="12.0" height="12.0" viewBox="0 0 12 12"><path d="M2.1 0 V7.2 Q2.1 8.7 4.3 8.5" fill="none" stroke="#98d0f6" stroke-width="1.9"/><path d="M0 3.3 H4.5" stroke="#98d0f6" stroke-width="1.4"/><path d="M5.6 4.6 H11.3" stroke="#3388cc" stroke-width="1.8"/><path d="M8.45 4.6 V11.2" stroke="#3388cc" stroke-width="1.9"/></svg>
<span id="t109" class="t" style="left:1027px;top:295.50px;font-size:7.9px;line-height:12px;color:#1c1c1c;letter-spacing:-0.039px;">Colored Type 3 font</span>
<svg style="left:1014.4px;top:296.3px;" width="12.0" height="12.0" viewBox="0 0 12 12"><path d="M2.1 0 V7.2 Q2.1 8.7 4.3 8.5" fill="none" stroke="#98d0f6" stroke-width="1.9"/><path d="M0 3.3 H4.5" stroke="#98d0f6" stroke-width="1.4"/><path d="M5.6 4.6 H11.3" stroke="#3388cc" stroke-width="1.8"/><path d="M8.45 4.6 V11.2" stroke="#3388cc" stroke-width="1.9"/></svg>
<span id="t110" class="t" style="left:1027px;top:309.50px;font-size:7.9px;line-height:12px;color:#1c1c1c;letter-spacing:-0.131px;">Contains white space characters</span>
<svg style="left:1014.4px;top:309.8px;" width="12.0" height="12.0" viewBox="0 0 12 12"><path d="M2.1 0 V7.2 Q2.1 8.7 4.3 8.5" fill="none" stroke="#98d0f6" stroke-width="1.9"/><path d="M0 3.3 H4.5" stroke="#98d0f6" stroke-width="1.4"/><path d="M5.6 4.6 H11.3" stroke="#3388cc" stroke-width="1.8"/><path d="M8.45 4.6 V11.2" stroke="#3388cc" stroke-width="1.9"/></svg>
<span id="t111" class="t" style="left:1027px;top:322.50px;font-size:7.9px;line-height:12px;color:#1c1c1c;letter-spacing:-0.077px;">Effective x-height</span>
<svg style="left:1014.4px;top:323.3px;" width="12.0" height="12.0" viewBox="0 0 12 12"><path d="M2.1 0 V7.2 Q2.1 8.7 4.3 8.5" fill="none" stroke="#98d0f6" stroke-width="1.9"/><path d="M0 3.3 H4.5" stroke="#98d0f6" stroke-width="1.4"/><path d="M5.6 4.6 H11.3" stroke="#3388cc" stroke-width="1.8"/><path d="M8.45 4.6 V11.2" stroke="#3388cc" stroke-width="1.9"/></svg>
<div style="left:1012px;top:330.8px;width:292px;height:1px;background:#a8a8a8;"></div>
<div style="left:1011px;top:331.8px;width:293px;height:4px;background:#f0f0f0;"></div>
<div style="left:856px;top:336.5px;width:448px;height:1px;background:#c4c4c4;"></div>
<div style="left:856px;top:337.5px;width:448px;height:1px;background:#fafafa;"></div>
<div style="left:856px;top:340px;width:448px;height:27px;background:#ffffb4;"></div>
<span id="t112" class="t" style="left:858.3px;top:342.50px;font-size:7.9px;line-height:12px;color:#1c1c1c;letter-spacing:0.002px;">Select a property in the &quot;Property&quot; list and click the &quot;Add&quot; button in the selected property entry to insert the property.</span>
<span id="t113" class="t" style="left:856.5px;top:368.50px;font-size:8.2px;line-height:12px;color:#1c1c1c;letter-spacing:-0.230px;">Group: Page description</span>
<svg style="left:858.2px;top:382.3px;" width="10" height="11.5" viewBox="0 0 10 11.5"><rect x=".4" y=".4" width="9.2" height="10.7" fill="#fff" stroke="#a9d0e8" stroke-width=".8"/><path d="M5 5.1 L3.3 2.3 L6.7 2.3Z M5 6.5 L3.3 9.3 L6.7 9.3Z M4.3 5.8 L1.5 4.1 L1.5 7.5Z M5.7 5.8 L8.5 4.1 L8.5 7.5Z" fill="#000"/><path d="M5 1.4 V3 M5 10.2 V8.6 M.9 5.8 H2.2 M9.1 5.8 H7.8" stroke="#000" stroke-width="1"/></svg>
<span id="t114" class="t" style="left:873px;top:382.50px;font-size:8.2px;line-height:12px;color:#1c1c1c;letter-spacing:-0.199px;">Is line</span>
<div style="left:856px;top:399px;width:50px;height:14.3px;background:#f0f0f0;border:1px solid;border-color:#fdfdfd #8a8a8a #8a8a8a #fdfdfd;box-shadow:.5px .5px 0 .3px #b0b0b0;"></div>
<div style="left:897.5px;top:404.95px;width:0;height:0;border-left:2.6px solid transparent;border-right:2.6px solid transparent;border-top:3px solid #111;"></div>
<span id="t115" class="t" style="left:858.5px;top:401.50px;font-size:8.2px;line-height:12px;color:#1c1c1c;letter-spacing:-0.114px;">is true</span>
<div style="left:856px;top:414px;width:448px;height:1px;background:#bdbdbd;"></div>
<span id="t116" class="t" style="left:856.5px;top:433.50px;font-size:8.2px;line-height:12px;color:#1c1c1c;letter-spacing:-0.169px;">Group: Graphic state properties for stroke</span>
<svg style="left:858px;top:448.3px;" width="10.5" height="10" viewBox="0 0 10.5 10"><rect x="3.8" y=".5" width="6" height="6.4" fill="#fff" stroke="#34b034" stroke-width="1"/><circle cx="2.9" cy="3.9" r="2.6" fill="#fff" stroke="#f0a030" stroke-width="1"/><path d="M1.2 9.4 L5.2 4.6 L9.2 9.4Z" fill="#dcb0f0" stroke="#a020c8" stroke-width="1.1"/></svg>
<span id="t117" class="t" style="left:873px;top:447.50px;font-size:8.2px;line-height:12px;color:#1c1c1c;letter-spacing:-0.087px;">Line width</span>
<div style="left:856px;top:463.5px;width:97.5px;height:14.5px;background:#f0f0f0;border:1px solid;border-color:#fdfdfd #8a8a8a #8a8a8a #fdfdfd;box-shadow:.5px .5px 0 .3px #b0b0b0;"></div>
<div style="left:945.0px;top:469.55px;width:0;height:0;border-left:2.6px solid transparent;border-right:2.6px solid transparent;border-top:3px solid #111;"></div>
<span id="t118" class="t" style="left:858.5px;top:466.50px;font-size:8.2px;line-height:12px;color:#1c1c1c;letter-spacing:-0.225px;">unequal to</span>
<span id="t119" class="t" style="left:861.5px;top:485.50px;font-size:8.2px;line-height:12px;color:#1c1c1c;letter-spacing:-0.129px;">Number:</span>
<div style="left:907px;top:482.5px;width:400px;height:17px;background:#fff;border:1px solid #7a7a7a;border-bottom-color:#b5b5b5;border-right-color:#a0a0a0;"></div>
<span id="t120" class="t" style="left:912px;top:484.50px;font-size:7.9px;line-height:12px;color:#1c1c1c;letter-spacing:-0.194px;">&lt;NeedThick:1&gt;</span>
<span id="t121" class="t" style="left:861.5px;top:507.50px;font-size:8.2px;line-height:12px;color:#1c1c1c;letter-spacing:-0.121px;">Plus/minus:</span>
<div style="left:907px;top:504.5px;width:400px;height:17px;background:#fff;border:1px solid #7a7a7a;border-bottom-color:#b5b5b5;border-right-color:#a0a0a0;"></div>
<div style="left:856px;top:523.5px;width:448px;height:1px;background:#bdbdbd;"></div>
<span id="t122" class="t" style="left:856.5px;top:525.50px;font-size:8.2px;line-height:12px;color:#1c1c1c;letter-spacing:-0.230px;">Group: Page description</span>
<svg style="left:858.2px;top:539.8px;" width="10" height="11.5" viewBox="0 0 10 11.5"><rect x=".4" y=".4" width="9.2" height="10.7" fill="#fff" stroke="#a9d0e8" stroke-width=".8"/><path d="M5 5.1 L3.3 2.3 L6.7 2.3Z M5 6.5 L3.3 9.3 L6.7 9.3Z M4.3 5.8 L1.5 4.1 L1.5 7.5Z M5.7 5.8 L8.5 4.1 L8.5 7.5Z" fill="#000"/><path d="M5 1.4 V3 M5 10.2 V8.6 M.9 5.8 H2.2 M9.1 5.8 H7.8" stroke="#000" stroke-width="1"/></svg>
<span id="t123" class="t" style="left:873px;top:539.50px;font-size:8.2px;line-height:12px;color:#1c1c1c;letter-spacing:-0.075px;">Stroked but not filled</span>
<div style="left:856px;top:556px;width:50px;height:14.3px;background:#f0f0f0;border:1px solid;border-color:#fdfdfd #8a8a8a #8a8a8a #fdfdfd;box-shadow:.5px .5px 0 .3px #b0b0b0;"></div>
<div style="left:897.5px;top:561.9499999999999px;width:0;height:0;border-left:2.6px solid transparent;border-right:2.6px solid transparent;border-top:3px solid #111;"></div>
<span id="t124" class="t" style="left:858.5px;top:558.50px;font-size:8.2px;line-height:12px;color:#1c1c1c;letter-spacing:-0.114px;">is true</span>
<div style="left:856px;top:571px;width:448px;height:1px;background:#bdbdbd;"></div>
</body></html>
